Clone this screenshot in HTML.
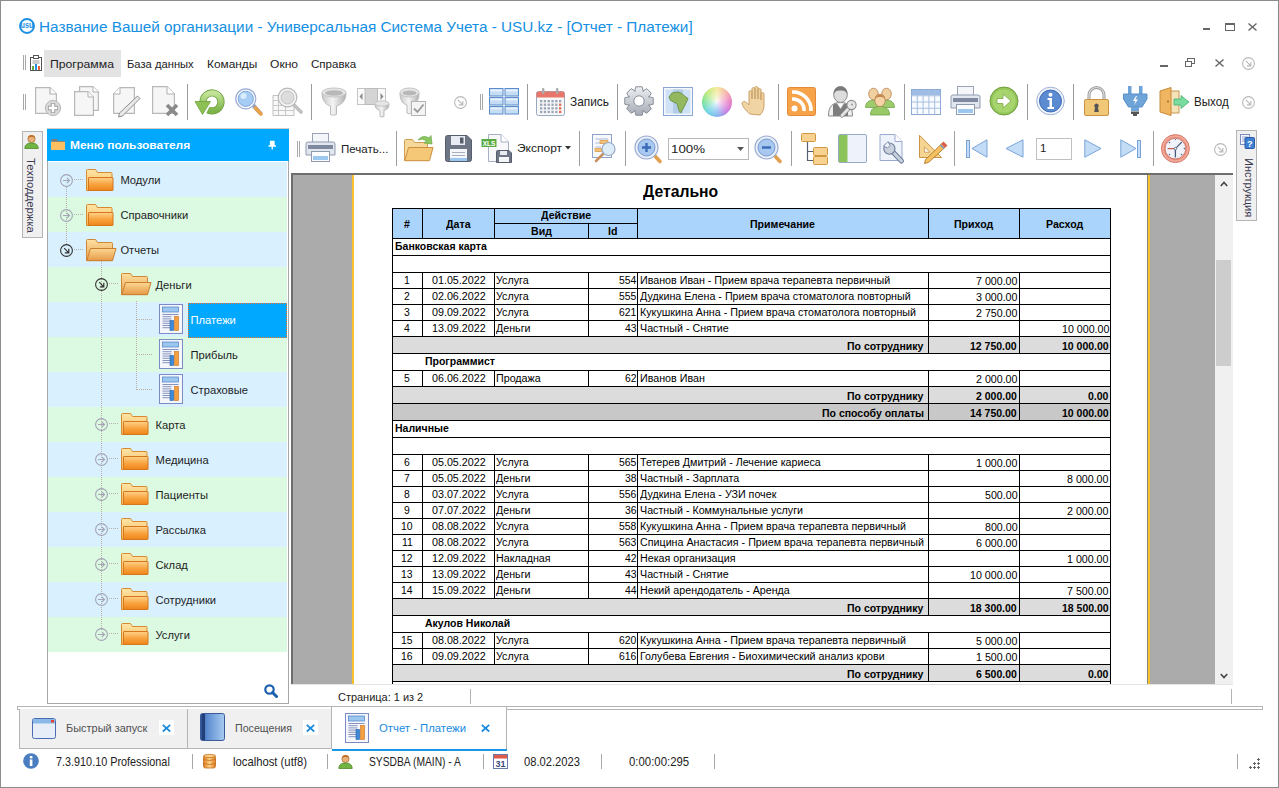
<!DOCTYPE html>
<html><head><meta charset="utf-8">
<style>
*{box-sizing:border-box;margin:0;padding:0}
html,body{width:1279px;height:788px;overflow:hidden;background:#fff;font-family:"Liberation Sans",sans-serif;color:#222}
.a{position:absolute}
svg.a{overflow:visible}
.t{position:absolute;white-space:nowrap;line-height:1}
</style></head><body>
<div class="a" style="left:0px;top:0px;width:1279px;height:788px;border:1px solid #8c8c8c;border-right:none"></div>
<div class="a" style="left:1278px;top:0px;width:1px;height:788px;background:#8c8c8c"></div>
<svg class="a" style="left:19px;top:18px" width="16" height="16" viewBox="0 0 16 16"><circle cx="8" cy="8" r="7" fill="none" stroke="#1b8fe3" stroke-width="1.9"/><text x="1.6" y="10.2" font-size="8.6" font-weight="bold" fill="#1b8fe3" textLength="12.8" lengthAdjust="spacingAndGlyphs" font-family="Liberation Sans">usu</text></svg>
<div class="t" style="left:39.20px;top:19.25px;font-size:15.3px;color:#1590e2;transform:scaleX(1.0009);transform-origin:0 0;">Название Вашей организации - Универсальная Система Учета - USU.kz - [Отчет - Платежи]</div>
<div class="a" style="left:1203px;top:28px;width:7px;height:2px;background:#666"></div>
<div class="a" style="left:1225px;top:23px;width:10px;height:8px;border:1px solid #666;border-top-width:2px"></div>
<svg class="a" style="left:1248px;top:23px" width="9" height="8" viewBox="0 0 9 8"><path d="M0.5 0.5L8.5 7.5M8.5 0.5L0.5 7.5" stroke="#666" stroke-width="1.4"/></svg>
<div class="a" style="left:23px;top:55px;width:1px;height:15px;background:#a8a8a8"></div>
<div class="a" style="left:25px;top:55px;width:1px;height:15px;background:#a8a8a8"></div>
<svg class="a" style="left:30px;top:55px" width="12" height="16" viewBox="0 0 12 16"><rect x="0.5" y="2.5" width="11" height="13" fill="#fff" stroke="#555"/><rect x="3.5" y="0.5" width="5" height="3" fill="#fff" stroke="#555"/><path d="M2.5 6h7M2.5 8h7" stroke="#999"/><rect x="2" y="11" width="2" height="4" fill="#6aaa3a"/><rect x="5" y="9" width="2" height="6" fill="#2a8ee0"/><rect x="8" y="11" width="2" height="4" fill="#e8603a"/></svg>
<div class="a" style="left:44px;top:50px;width:77px;height:27px;background:#e3e3e3"></div>
<div class="t" style="left:50.30px;top:59.07px;font-size:11.5px;color:#222;transform:scaleX(1.0611);transform-origin:0 0;">Программа</div>
<div class="t" style="left:127.10px;top:59.07px;font-size:11.5px;color:#222;transform:scaleX(0.9740);transform-origin:0 0;">База данных</div>
<div class="t" style="left:206.90px;top:59.07px;font-size:11.5px;color:#222;transform:scaleX(1.0328);transform-origin:0 0;">Команды</div>
<div class="t" style="left:270.30px;top:59.07px;font-size:11.5px;color:#222;transform:scaleX(1.0510);transform-origin:0 0;">Окно</div>
<div class="t" style="left:311.00px;top:59.07px;font-size:11.5px;color:#222;transform:scaleX(1.0036);transform-origin:0 0;">Справка</div>
<div class="a" style="left:1160px;top:65px;width:8px;height:2px;background:#666"></div>
<svg class="a" style="left:1185px;top:58px" width="10" height="9" viewBox="0 0 10 9"><rect x="2.5" y="0.5" width="7" height="5" fill="none" stroke="#666"/><rect x="0.5" y="3.5" width="6" height="5" fill="#fff" stroke="#666"/></svg>
<svg class="a" style="left:1215px;top:59px" width="9" height="8" viewBox="0 0 9 8"><path d="M0.5 0.5L8.5 7.5M8.5 0.5L0.5 7.5" stroke="#666" stroke-width="1.4"/></svg>
<svg class="a" style="left:1242px;top:57px" width="13" height="13" viewBox="0 0 13 13"><circle cx="6.5" cy="6.5" r="5.9" fill="none" stroke="#b8b8b8" stroke-width="1.1"/><path d="M3.9 3.9L8.84 8.84M8.84 4.94V8.84H4.94" fill="none" stroke="#b8b8b8" stroke-width="1.1"/></svg>
<div class="a" style="left:23px;top:94px;width:1px;height:16px;background:#a8a8a8"></div>
<div class="a" style="left:25px;top:94px;width:1px;height:16px;background:#a8a8a8"></div>
<svg class="a" style="left:35px;top:87px" width="27" height="29" viewBox="0 0 27 29"><path d="M0.6 0.6H15L21.4 7V26.4H0.6Z" fill="#f6f6f6" stroke="#b8b8b8" stroke-width="1.2"/><path d="M15 0.6V7H21.4" fill="#fff" stroke="#b0b0b0" stroke-width="1.2"/><circle cx="18" cy="21" r="7.6" fill="#dadada" stroke="#b8b8b8"/><path d="M18 16V26M13 21H23" stroke="#a0a0a0" stroke-width="4.4"/><path d="M18 16.8V25.2M13.8 21H22.2" stroke="#fff" stroke-width="2.4"/></svg>
<svg class="a" style="left:74px;top:86px" width="26" height="30" viewBox="0 0 26 30"><path d="M5.6 0.6H19L24.4 6V24.4H5.6Z" fill="#f6f6f6" stroke="#b8b8b8" stroke-width="1.2"/><path d="M19 0.6V6H24.4" fill="#fff" stroke="#b0b0b0"/><path d="M0.6 5.6H14L19.4 11V29.4H0.6Z" fill="#f6f6f6" stroke="#b8b8b8" stroke-width="1.2"/><path d="M14 5.6V11H19.4" fill="#fff" stroke="#b0b0b0"/></svg>
<svg class="a" style="left:113px;top:87px" width="28" height="30" viewBox="0 0 28 30"><path d="M7 0.6H21.4V26.4H0.6V7Z" fill="#f6f6f6" stroke="#b8b8b8" stroke-width="1.2"/><path d="M7 0.6V7H0.6" fill="#fff" stroke="#b0b0b0"/><path d="M24.5 9L27 11.5L9.5 29L5.5 30L6.5 26Z" fill="#e8e8e8" stroke="#8c8c8c" stroke-width="1"/></svg>
<svg class="a" style="left:152px;top:86px" width="29" height="30" viewBox="0 0 29 30"><path d="M0.6 0.6H15L22.4 8V27.4H0.6Z" fill="#f6f6f6" stroke="#b8b8b8" stroke-width="1.2"/><path d="M15 0.6V8H22.4" fill="#fff" stroke="#b0b0b0"/><path d="M15 19L25 29M25 19L15 29" stroke="#8a8a8a" stroke-width="3.6"/></svg>
<div class="a" style="left:187px;top:84px;width:1px;height:36px;background:#9a9a9a"></div>
<svg class="a" style="left:194px;top:88px" width="32" height="28" viewBox="0 0 32 28"><defs><linearGradient id="rg" x1="0" y1="0" x2="0" y2="1"><stop offset="0" stop-color="#c4e49a"/><stop offset="1" stop-color="#7cb448"/></linearGradient></defs><path d="M9 14A9 9 0 1 1 14 22" fill="none" stroke="#6fa23e" stroke-width="7.2"/><path d="M9 14A9 9 0 1 1 14 22" fill="none" stroke="url(#rg)" stroke-width="5.4"/><path d="M1 13.5H16.5L8.5 26.5Z" fill="#8cc055" stroke="#6fa23e" stroke-width="0.8" stroke-linejoin="round"/></svg>
<svg class="a" style="left:234px;top:87px" width="30" height="30" viewBox="0 0 30 30"><path d="M19 18L27 27" stroke="#8a9bc0" stroke-width="4"/><path d="M21.5 21L27 27" stroke="#e8a24a" stroke-width="3.6" stroke-linecap="round"/><circle cx="11.8" cy="11.8" r="10" fill="#fff" stroke="#9aabd8" stroke-width="1.2"/><circle cx="11.8" cy="11.8" r="7.6" fill="#a6cdf4" stroke="#7fa6dc"/><circle cx="9.5" cy="9" r="3" fill="#d8ecfd"/></svg>
<svg class="a" style="left:272px;top:86px" width="32" height="31" viewBox="0 0 32 31"><path d="M1 9.5H22V29.5H1Z" fill="#f8f8f8" stroke="#c0c0c0"/><path d="M1 14.5H22M1 19.5H22M1 24.5H22M6.5 9.5V29.5M13.5 9.5V29.5" stroke="#c8c8c8"/><path d="M21 18L29 26" stroke="#c0c0c0" stroke-width="3.8" stroke-linecap="round"/><circle cx="15.5" cy="11.5" r="9.3" fill="#f4f4f4" stroke="#b8b8b8" stroke-width="1.2"/><circle cx="15.5" cy="11.5" r="6.5" fill="#dcdcdc" stroke="#c4c4c4"/></svg>
<div class="a" style="left:311px;top:84px;width:1px;height:36px;background:#9a9a9a"></div>
<svg class="a" style="left:321px;top:87px" width="27" height="29" viewBox="0 0 27 29"><defs><linearGradient id="fg" x1="0" x2="1"><stop offset="0" stop-color="#c8c8c8"/><stop offset="0.45" stop-color="#f4f4f4"/><stop offset="1" stop-color="#b0b0b0"/></linearGradient></defs><path d="M1 6C1 15 6 18 9.5 19V27.5Q12.5 29 15.5 27.5V19C19 18 25 15 25 6Z" fill="url(#fg)" stroke="#bcbcbc"/><ellipse cx="13" cy="5.5" rx="12" ry="4.5" fill="#e6e6e6" stroke="#c4c4c4"/><ellipse cx="13" cy="6" rx="9" ry="2.8" fill="#b8b8b8"/></svg>
<svg class="a" style="left:357px;top:88px" width="33" height="30" viewBox="0 0 33 30"><rect x="0.5" y="0.5" width="28" height="16" fill="#fafafa" stroke="#c4c4c4"/><rect x="8" y="0.5" width="12.5" height="16" fill="#d4d4d4" stroke="#bcbcbc"/><path d="M5.5 5V12L2.5 8.5Z M23.5 5V12L26.5 8.5Z" fill="#8a8a8a"/><path d="M18 16C18 21 21 22 23 22.5V28.5Q25 29.5 27 28.5V22.5C29 22 32 21 32 16Z" fill="url(#fg)" stroke="#bcbcbc"/><ellipse cx="25" cy="15.5" rx="7" ry="2.6" fill="#e6e6e6" stroke="#c4c4c4"/></svg>
<svg class="a" style="left:399px;top:87px" width="28" height="30" viewBox="0 0 28 30"><path d="M1 6C1 15 5 17 8 18V26Q10.5 27.5 13 26V18C16 17 20 15 20 6Z" fill="url(#fg)" stroke="#bcbcbc"/><ellipse cx="10.5" cy="5.5" rx="9.5" ry="4.5" fill="#e6e6e6" stroke="#c4c4c4"/><ellipse cx="10.5" cy="6" rx="7" ry="2.6" fill="#b8b8b8"/><rect x="12.5" y="14.5" width="14" height="14" fill="#f4f4f4" stroke="#b4b4b4"/><path d="M15 21.5L18.5 25L24.5 17.5" fill="none" stroke="#9a9a9a" stroke-width="1.8"/></svg>
<svg class="a" style="left:454px;top:96px" width="13" height="13" viewBox="0 0 13 13"><circle cx="6.5" cy="6.5" r="5.9" fill="none" stroke="#b8b8b8" stroke-width="1.1"/><path d="M3.9 3.9L8.84 8.84M8.84 4.94V8.84H4.94" fill="none" stroke="#b8b8b8" stroke-width="1.1"/></svg>
<div class="a" style="left:480px;top:94px;width:1px;height:16px;background:#a8a8a8"></div>
<div class="a" style="left:482px;top:94px;width:1px;height:16px;background:#a8a8a8"></div>
<svg class="a" style="left:489px;top:88px" width="30" height="27" viewBox="0 0 30 27"><rect x="0.5" y="0.5" width="13.5" height="7.5" fill="#c4dcf4" stroke="#5c8ccc"/><rect x="1.5" y="1.5" width="11.5" height="2" fill="#e4f0fc"/><rect x="16.0" y="0.5" width="13.5" height="7.5" fill="#c4dcf4" stroke="#5c8ccc"/><rect x="17.0" y="1.5" width="11.5" height="2" fill="#e4f0fc"/><rect x="0.5" y="9.5" width="13.5" height="7.5" fill="#c4dcf4" stroke="#5c8ccc"/><rect x="1.5" y="10.5" width="11.5" height="2" fill="#e4f0fc"/><rect x="16.0" y="9.5" width="13.5" height="7.5" fill="#c4dcf4" stroke="#5c8ccc"/><rect x="17.0" y="10.5" width="11.5" height="2" fill="#e4f0fc"/><rect x="0.5" y="18.5" width="13.5" height="7.5" fill="#c4dcf4" stroke="#5c8ccc"/><rect x="1.5" y="19.5" width="11.5" height="2" fill="#e4f0fc"/><rect x="16.0" y="18.5" width="13.5" height="7.5" fill="#c4dcf4" stroke="#5c8ccc"/><rect x="17.0" y="19.5" width="11.5" height="2" fill="#e4f0fc"/></svg>
<div class="a" style="left:527px;top:84px;width:1px;height:36px;background:#9a9a9a"></div>
<svg class="a" style="left:536px;top:87px" width="29" height="29" viewBox="0 0 29 29"><rect x="0.5" y="4.5" width="28" height="24" rx="2" fill="#f8f8f8" stroke="#9aa8c0"/><path d="M0.5 6.5Q0.5 4.5 2.5 4.5H26.5Q28.5 4.5 28.5 6.5V10.5H0.5Z" fill="#e9766a"/><rect x="6" y="1" width="2.4" height="6" rx="1" fill="#aaa"/><rect x="20" y="1" width="2.4" height="6" rx="1" fill="#aaa"/><rect x="4.0" y="13.0" width="2.3" height="2.3" fill="#9aa4b8"/><rect x="7.8" y="13.0" width="2.3" height="2.3" fill="#9aa4b8"/><rect x="11.6" y="13.0" width="2.3" height="2.3" fill="#9aa4b8"/><rect x="15.4" y="13.0" width="2.3" height="2.3" fill="#9aa4b8"/><rect x="19.2" y="13.0" width="2.3" height="2.3" fill="#9aa4b8"/><rect x="23.0" y="13.0" width="2.3" height="2.3" fill="#9aa4b8"/><rect x="4.0" y="16.6" width="2.3" height="2.3" fill="#9aa4b8"/><rect x="7.8" y="16.6" width="2.3" height="2.3" fill="#9aa4b8"/><rect x="11.6" y="16.6" width="2.3" height="2.3" fill="#9aa4b8"/><rect x="15.4" y="16.6" width="2.3" height="2.3" fill="#9aa4b8"/><rect x="19.2" y="16.6" width="2.3" height="2.3" fill="#9aa4b8"/><rect x="23.0" y="16.6" width="2.3" height="2.3" fill="#e06a55"/><rect x="4.0" y="20.2" width="2.3" height="2.3" fill="#9aa4b8"/><rect x="7.8" y="20.2" width="2.3" height="2.3" fill="#9aa4b8"/><rect x="11.6" y="20.2" width="2.3" height="2.3" fill="#9aa4b8"/><rect x="15.4" y="20.2" width="2.3" height="2.3" fill="#9aa4b8"/><rect x="19.2" y="20.2" width="2.3" height="2.3" fill="#9aa4b8"/><rect x="23.0" y="20.2" width="2.3" height="2.3" fill="#e06a55"/><rect x="4.0" y="23.8" width="2.3" height="2.3" fill="#9aa4b8"/><rect x="7.8" y="23.8" width="2.3" height="2.3" fill="#9aa4b8"/><rect x="11.6" y="23.8" width="2.3" height="2.3" fill="#9aa4b8"/><rect x="15.4" y="23.8" width="2.3" height="2.3" fill="#9aa4b8"/><rect x="19.2" y="23.8" width="2.3" height="2.3" fill="#9aa4b8"/><rect x="23.0" y="23.8" width="2.3" height="2.3" fill="#e06a55"/></svg>
<div class="t" style="left:570.00px;top:95.50px;font-size:12.4px;color:#222;transform:scaleX(0.9589);transform-origin:0 0;">Запись</div>
<div class="a" style="left:617px;top:84px;width:1px;height:36px;background:#9a9a9a"></div>
<svg class="a" style="left:624px;top:86px" width="30" height="30" viewBox="0 0 30 30"><defs><linearGradient id="gg" x1="0" y1="0" x2="0" y2="1"><stop offset="0" stop-color="#eef0f4"/><stop offset="1" stop-color="#a4aab4"/></linearGradient></defs><polygon points="24.59,10.72 29.25,11.81 29.25,18.19 24.59,19.28 24.81,18.75 27.33,22.82 22.82,27.33 18.75,24.81 19.28,24.59 18.19,29.25 11.81,29.25 10.72,24.59 11.25,24.81 7.18,27.33 2.67,22.82 5.19,18.75 5.41,19.28 0.75,18.19 0.75,11.81 5.41,10.72 5.19,11.25 2.67,7.18 7.18,2.67 11.25,5.19 10.72,5.41 11.81,0.75 18.19,0.75 19.28,5.41 18.75,5.19 22.82,2.67 27.33,7.18 24.81,11.25" fill="url(#gg)" stroke="#8a909a" stroke-linejoin="round"/><circle cx="15" cy="15" r="5.2" fill="#fff" stroke="#8a909a"/></svg>
<svg class="a" style="left:663px;top:87px" width="31" height="29" viewBox="0 0 31 29"><rect x="0.5" y="0.5" width="29" height="28" fill="#f4f8fc" stroke="#8aa6d4"/><rect x="2.5" y="2.5" width="25" height="24" fill="#cfe1f4"/><rect x="10" y="2.5" width="10" height="24" fill="#b2cce8"/><path d="M9 6L15 5L19 6.5L21.5 9L25 11.5L23 16L21 20L17.5 26L15.5 22.5L14.5 17.5L12 15.5L7.5 13.5L6 10Z" fill="#94b860" stroke="#5e8a34" stroke-width="0.8" stroke-linejoin="round"/></svg>
<div class="a" style="left:702px;top:87px;width:30px;height:30px;border-radius:50%;background:radial-gradient(circle,rgba(255,255,255,0.9) 0,rgba(255,255,255,0.5) 30%,rgba(255,255,255,0) 75%),conic-gradient(#f4e890,#f4a8a0,#e870c0,#c070e0,#70b0f0,#60d0e0,#70e090,#b8e870,#f4e890)"></div>
<svg class="a" style="left:741px;top:86px" width="30" height="31" viewBox="0 0 30 31"><path d="M9 28C5 25 1 20 1 17C2 15 4 15 6 17L8 19V6C8 4 11 4 11 6V13V3C11 1 14 1 14 3V13V2C14 0 17 0 17 2V13V4C17 2 20 2 20 4V14V8C20 6 23 6 23 8V19C23 24 21 27 19 29Z" fill="#f1d4a4" stroke="#c9a066" stroke-width="1"/></svg>
<div class="a" style="left:778px;top:84px;width:1px;height:36px;background:#9a9a9a"></div>
<svg class="a" style="left:787px;top:87px" width="30" height="29" viewBox="0 0 30 29"><rect x="0.5" y="0.5" width="28" height="28" rx="2" fill="#f7a34a" stroke="#e4893a"/><circle cx="7.5" cy="21.5" r="3" fill="#fff"/><path d="M5 12A11 11 0 0 1 17 24M5 5A18 18 0 0 1 24 24" fill="none" stroke="#fff" stroke-width="3.6"/></svg>
<svg class="a" style="left:827px;top:86px" width="30" height="31" viewBox="0 0 30 31"><path d="M1.5 30C1.5 21 5 16.5 13.5 16.5C22 16.5 25.5 21 25.5 30Z" fill="#f0f0f0" stroke="#8a8a8a"/><path d="M6 30V18.5Q13.5 16 21 18.5V30Z" fill="#7e7e7e"/><path d="M9.5 16.8L13.5 23L17.5 16.8Z" fill="#fff" stroke="#999" stroke-width="0.6"/><ellipse cx="13.5" cy="8.5" rx="6.8" ry="8" fill="#dcdcdc" stroke="#8a8a8a"/><path d="M6.7 8.5Q6.5 0.5 13.5 0.5Q20.5 0.5 20.3 8.5Q19 4 13.5 4.5Q8 4 6.7 8.5Z" fill="#7a7a7a"/><path d="M22 22L15 29.5" stroke="#8a8a8a" stroke-width="4.2" stroke-linecap="round"/><path d="M22 22L15 29.5" stroke="#e6e6e6" stroke-width="2.6" stroke-linecap="round"/><circle cx="24.5" cy="19" r="4.6" fill="#e6e6e6" stroke="#8a8a8a" stroke-width="1.1"/><circle cx="25" cy="18.5" r="1" fill="#999"/></svg>
<svg class="a" style="left:864px;top:86px" width="32" height="30" viewBox="0 0 32 30"><path d="M1.5 21.5C1.5 16.5 5 14 9.5 14C14 14 17.5 16.5 17.5 21.5Z" fill="#9ccc6c" stroke="#74a44a" stroke-width="0.8"/><path d="M14.5 21.5C14.5 16.5 18 14 22.5 14C27 14 30.5 16.5 30.5 21.5Z" fill="#9ccc6c" stroke="#74a44a" stroke-width="0.8"/><ellipse cx="9.5" cy="8" rx="4.8" ry="5.8" fill="#f0d0a0" stroke="#b88050" stroke-width="0.8"/><ellipse cx="22.5" cy="8" rx="4.8" ry="5.8" fill="#f0d0a0" stroke="#b88050" stroke-width="0.8"/><path d="M6.5 29C6.5 23 10 20.5 16 20.5C22 20.5 25.5 23 25.5 29Z" fill="#98c868" stroke="#6e9e44" stroke-width="0.8"/><ellipse cx="16" cy="14.5" rx="5.2" ry="6.2" fill="#f4d4a4" stroke="#b88050" stroke-width="0.8"/><path d="M10.8 13Q11 8.3 16 8.3Q21 8.3 21.2 13Q19 10.5 16 11Q13 10.5 10.8 13Z" fill="#c48a50"/></svg>
<div class="a" style="left:904px;top:84px;width:1px;height:36px;background:#9a9a9a"></div>
<svg class="a" style="left:911px;top:88px" width="30" height="28" viewBox="0 0 30 28"><rect x="0.5" y="1.5" width="29" height="25" fill="#f8fbff" stroke="#8ea9d4"/><rect x="1" y="2" width="28" height="5" fill="#9dbde6"/><path d="M0.5 7.75H29.5" stroke="#a8bfdf"/><path d="M0.5 14.00H29.5" stroke="#a8bfdf"/><path d="M0.5 20.25H29.5" stroke="#a8bfdf"/><path d="M6.30 1.5V26.5" stroke="#a8bfdf"/><path d="M12.10 1.5V26.5" stroke="#a8bfdf"/><path d="M17.90 1.5V26.5" stroke="#a8bfdf"/><path d="M23.70 1.5V26.5" stroke="#a8bfdf"/></svg>
<svg class="a" style="left:950px;top:86px" width="31" height="30" viewBox="0 0 31 30"><rect x="7.5" y="0.5" width="16" height="11" fill="#f4f6fa" stroke="#9aa4b4"/><path d="M1 11Q1 9 3 9H28Q30 9 30 11V22H1Z" fill="#e2e6ee" stroke="#8f9aae"/><rect x="3" y="12" width="25" height="4" fill="#7f8aa0"/><rect x="6.5" y="18.5" width="18" height="10" fill="#fafcff" stroke="#8f9aae"/><rect x="8" y="23" width="15" height="4" fill="#9cc7ee"/></svg>
<svg class="a" style="left:989px;top:86px" width="30" height="30" viewBox="0 0 30 30"><circle cx="15" cy="15" r="14" fill="#94c65a" stroke="#6e9e3c"/><circle cx="15" cy="15" r="11.5" fill="#a8d46e"/><path d="M8 12.5H14V8L22 15L14 22V17.5H8Z" fill="#fff" stroke="#7aa845" stroke-width="0.8"/></svg>
<div class="a" style="left:1027px;top:84px;width:1px;height:36px;background:#9a9a9a"></div>
<svg class="a" style="left:1036px;top:86px" width="29" height="30" viewBox="0 0 29 30"><circle cx="14.5" cy="15" r="13.8" fill="#f2f5fb" stroke="#9cb0d6"/><circle cx="14.5" cy="15" r="11" fill="#5b8bd0" stroke="#3e6bb6"/><circle cx="14.5" cy="8.8" r="2" fill="#fff"/><path d="M11.5 12H16V21H18V23H11.5V21H13.5V14H11.5Z" fill="#fff"/></svg>
<div class="a" style="left:1073px;top:84px;width:1px;height:36px;background:#9a9a9a"></div>
<svg class="a" style="left:1084px;top:86px" width="25" height="31" viewBox="0 0 25 31"><path d="M5 14V9A7.5 7.5 0 0 1 20 9V14" fill="none" stroke="#9a9a9a" stroke-width="3"/><path d="M5 14V9A7.5 7.5 0 0 1 20 9V14" fill="none" stroke="#dcdcdc" stroke-width="1.2"/><rect x="0.5" y="13.5" width="24" height="16" rx="1.5" fill="#f0c878" stroke="#c89440"/><path d="M12.5 17.5A2.3 2.3 0 0 1 14 21.5L14.8 26H10.2L11 21.5A2.3 2.3 0 0 1 12.5 17.5Z" fill="#555"/></svg>
<svg class="a" style="left:1123px;top:86px" width="25" height="31" viewBox="0 0 25 31"><rect x="5" y="0" width="3.5" height="8" fill="#6ea4d8"/><rect x="16" y="0" width="3.5" height="8" fill="#6ea4d8"/><path d="M0.5 8H24V13L19 21H5.5L0.5 13Z" fill="#6ea4d8" stroke="#5a90c8"/><rect x="8" y="21" width="8" height="4" fill="#6ea4d8"/><rect x="8" y="25.5" width="8" height="2.5" fill="#555"/><rect x="10" y="28" width="4" height="2" fill="#555"/><path d="M13 10L10 15H12.5L11 19L15 13.5H12.5L14 10Z" fill="#fff"/></svg>
<svg class="a" style="left:1159px;top:87px" width="31" height="29" viewBox="0 0 31 29"><rect x="10" y="4" width="10" height="22" fill="#f4e2b8" stroke="#c89a52"/><path d="M1 4L12 0.5V28.5L1 25Z" fill="#f0b560" stroke="#c88a3a" stroke-linejoin="round"/><circle cx="9" cy="14.5" r="1" fill="#9a6a2a"/><path d="M15 12H22V8.5L30 15L22 21.5V18H15Z" fill="#78dca0" stroke="#48b070" stroke-width="0.8"/></svg>
<div class="t" style="left:1194.00px;top:95.50px;font-size:12.4px;color:#222;transform:scaleX(0.9386);transform-origin:0 0;">Выход</div>
<svg class="a" style="left:1242px;top:96px" width="13" height="13" viewBox="0 0 13 13"><circle cx="6.5" cy="6.5" r="5.9" fill="none" stroke="#b8b8b8" stroke-width="1.1"/><path d="M3.9 3.9L8.84 8.84M8.84 4.94V8.84H4.94" fill="none" stroke="#b8b8b8" stroke-width="1.1"/></svg>
<div class="a" style="left:22px;top:131px;width:21px;height:107px;background:#f0f0f0;border:1px solid #b4b4b4"></div>
<svg class="a" style="left:24px;top:134px" width="15" height="15" viewBox="0 0 15 15"><circle cx="7.5" cy="5" r="3.6" fill="#e8b27a" stroke="#b0723a" stroke-width="0.8"/><path d="M3.8 4.5Q4 1 7.5 1Q11 1 11.2 4.5Q10 2.6 7.5 3Q5 2.6 3.8 4.5Z" fill="#c0702a"/><path d="M0.8 14.5C0.8 10.5 3.5 9 7.5 9C11.5 9 14.2 10.5 14.2 14.5Z" fill="#72b444" stroke="#4e8a2a" stroke-width="0.8"/></svg>
<div class="t" style="left:36.3px;top:157.80px;font-size:11.2px;color:#3a3a50;transform:rotate(90deg) scaleX(1.0100);transform-origin:0 0">Техподдержка</div>
<div class="a" style="left:47px;top:128px;width:242px;height:576px;border:1px solid #a8a8a8;background:#fff"></div>
<div class="a" style="left:47px;top:128px;width:242px;height:33px;background:#00a8ff;border-top:1px solid #d8ccc4"></div>
<svg class="a" style="left:51px;top:139px" width="14" height="11" viewBox="0 0 14 11"><path d="M0.5 3V1Q0.5 0 1.5 0H5.5L7 2H13.5V3Z" fill="#7a7a7a"/><rect x="0" y="2.8" width="14" height="8.2" fill="#fcc062"/></svg>
<div class="t" style="left:70.00px;top:140.43px;font-size:11.3px;color:#fff;font-weight:bold;transform:scaleX(1.0563);transform-origin:0 0;">Меню пользователя</div>
<svg class="a" style="left:268px;top:141px" width="8" height="9" viewBox="0 0 8 9"><path d="M2 0.5H6.5M2.5 0.5V5M6 0.5V5M0.5 5H8M4.2 5V8.5" stroke="#fff" stroke-width="1.3" fill="none"/><rect x="2.5" y="1" width="3.5" height="4" fill="#fff"/></svg>
<div class="a" style="left:48px;top:162px;width:239px;height:35px;background:#d9f0fe"></div>
<div class="a" style="left:48px;top:197px;width:239px;height:35px;background:#dcf9e2"></div>
<div class="a" style="left:48px;top:232px;width:239px;height:35px;background:#d9f0fe"></div>
<div class="a" style="left:48px;top:267px;width:239px;height:35px;background:#dcf9e2"></div>
<div class="a" style="left:48px;top:302px;width:239px;height:35px;background:#d9f0fe"></div>
<div class="a" style="left:48px;top:337px;width:239px;height:35px;background:#dcf9e2"></div>
<div class="a" style="left:48px;top:372px;width:239px;height:35px;background:#d9f0fe"></div>
<div class="a" style="left:48px;top:407px;width:239px;height:35px;background:#dcf9e2"></div>
<div class="a" style="left:48px;top:442px;width:239px;height:35px;background:#d9f0fe"></div>
<div class="a" style="left:48px;top:477px;width:239px;height:35px;background:#dcf9e2"></div>
<div class="a" style="left:48px;top:512px;width:239px;height:35px;background:#d9f0fe"></div>
<div class="a" style="left:48px;top:547px;width:239px;height:35px;background:#dcf9e2"></div>
<div class="a" style="left:48px;top:582px;width:239px;height:35px;background:#d9f0fe"></div>
<div class="a" style="left:48px;top:617px;width:239px;height:35px;background:#dcf9e2"></div>
<div class="a" style="left:66px;top:187px;width:1px;height:57px;background:repeating-linear-gradient(180deg,#b8b0a8 0 1px,transparent 1px 2px)"></div>
<div class="a" style="left:101px;top:259px;width:1px;height:371px;background:repeating-linear-gradient(180deg,#b8b0a8 0 1px,transparent 1px 2px)"></div>
<div class="a" style="left:136px;top:301px;width:1px;height:90px;background:repeating-linear-gradient(180deg,#b8b0a8 0 1px,transparent 1px 2px)"></div>
<svg class="a" style="left:60.0px;top:174.0px" width="13" height="13" viewBox="0 0 13 13"><circle cx="6.5" cy="6.5" r="5.9" fill="none" stroke="#a4a4b4" stroke-width="1.1"/><path d="M3 6.5H9.5M6.8 3.8L9.5 6.5L6.8 9.2" fill="none" stroke="#a4a4b4" stroke-width="1.1"/></svg>
<div class="a" style="left:74px;top:179px;width:10px;height:1px;background:repeating-linear-gradient(90deg,#b8b0a8 0 1px,transparent 1px 2px)"></div>
<svg class="a" style="left:86px;top:169px" width="28" height="23" viewBox="0 0 28 23"><defs><linearGradient id="fb" x1="0" y1="0" x2="0" y2="1"><stop offset="0" stop-color="#fee6a8"/><stop offset="1" stop-color="#f9b554"/></linearGradient><linearGradient id="ff" x1="0" y1="0" x2="0" y2="1"><stop offset="0" stop-color="#ffd28a"/><stop offset="0.5" stop-color="#f9a542"/><stop offset="1" stop-color="#ee8418"/></linearGradient></defs><path d="M0.5 21.5V1.5Q0.5 0.5 1.5 0.5H9.5L11.5 3.5H25.5Q26 3.5 26 4.5V21.5Z" fill="url(#fb)" stroke="#d98a30" stroke-width="1"/><path d="M2.5 21.5V9Q2.5 8.5 3 8.5H26.5Q27 8.5 27 9V21Q27 21.5 26.5 21.5Z" fill="url(#ff)" stroke="#d5771c" stroke-width="1"/></svg>
<div class="t" style="left:120.40px;top:174.82px;font-size:11.2px;color:#1e1e1e;">Модули</div>
<svg class="a" style="left:60.0px;top:209.0px" width="13" height="13" viewBox="0 0 13 13"><circle cx="6.5" cy="6.5" r="5.9" fill="none" stroke="#a4a4b4" stroke-width="1.1"/><path d="M3 6.5H9.5M6.8 3.8L9.5 6.5L6.8 9.2" fill="none" stroke="#a4a4b4" stroke-width="1.1"/></svg>
<div class="a" style="left:74px;top:214px;width:10px;height:1px;background:repeating-linear-gradient(90deg,#b8b0a8 0 1px,transparent 1px 2px)"></div>
<svg class="a" style="left:86px;top:204px" width="28" height="23" viewBox="0 0 28 23"><defs><linearGradient id="fb" x1="0" y1="0" x2="0" y2="1"><stop offset="0" stop-color="#fee6a8"/><stop offset="1" stop-color="#f9b554"/></linearGradient><linearGradient id="ff" x1="0" y1="0" x2="0" y2="1"><stop offset="0" stop-color="#ffd28a"/><stop offset="0.5" stop-color="#f9a542"/><stop offset="1" stop-color="#ee8418"/></linearGradient></defs><path d="M0.5 21.5V1.5Q0.5 0.5 1.5 0.5H9.5L11.5 3.5H25.5Q26 3.5 26 4.5V21.5Z" fill="url(#fb)" stroke="#d98a30" stroke-width="1"/><path d="M2.5 21.5V9Q2.5 8.5 3 8.5H26.5Q27 8.5 27 9V21Q27 21.5 26.5 21.5Z" fill="url(#ff)" stroke="#d5771c" stroke-width="1"/></svg>
<div class="t" style="left:120.40px;top:209.82px;font-size:11.2px;color:#1e1e1e;">Справочники</div>
<svg class="a" style="left:60.0px;top:244.0px" width="13" height="13" viewBox="0 0 13 13"><circle cx="6.5" cy="6.5" r="5.9" fill="none" stroke="#333" stroke-width="1.1"/><path d="M4.2 4.2L8.8 8.8M8.8 4.8V8.8H4.8" fill="none" stroke="#333" stroke-width="1.2"/></svg>
<div class="a" style="left:74px;top:249px;width:10px;height:1px;background:repeating-linear-gradient(90deg,#b8b0a8 0 1px,transparent 1px 2px)"></div>
<svg class="a" style="left:86px;top:239px" width="31" height="23" viewBox="0 0 31 23"><defs><linearGradient id="fo" x1="0" y1="0" x2="0" y2="1"><stop offset="0" stop-color="#fde0a0"/><stop offset="1" stop-color="#e8a050"/></linearGradient><linearGradient id="fo2" x1="0" y1="0" x2="0" y2="1"><stop offset="0" stop-color="#fcd792"/><stop offset="1" stop-color="#e69a48"/></linearGradient></defs><path d="M0.5 21.5V1.5Q0.5 0.5 1.5 0.5H9.5L11.5 3.5H25.5Q26.5 3.5 26.5 4.5V21.5Z" fill="url(#fo)" stroke="#d08838" stroke-width="1"/><path d="M0.8 21.7L4.5 9.5H30L26.5 21.7Z" fill="url(#fo2)" stroke="#cc7e30" stroke-width="1" stroke-linejoin="round"/></svg>
<div class="t" style="left:120.40px;top:244.82px;font-size:11.2px;color:#1e1e1e;">Отчеты</div>
<svg class="a" style="left:95.0px;top:278.0px" width="13" height="13" viewBox="0 0 13 13"><circle cx="6.5" cy="6.5" r="5.9" fill="none" stroke="#333" stroke-width="1.1"/><path d="M4.2 4.2L8.8 8.8M8.8 4.8V8.8H4.8" fill="none" stroke="#333" stroke-width="1.2"/></svg>
<div class="a" style="left:109px;top:283px;width:10px;height:1px;background:repeating-linear-gradient(90deg,#b8b0a8 0 1px,transparent 1px 2px)"></div>
<svg class="a" style="left:121px;top:273px" width="31" height="23" viewBox="0 0 31 23"><defs><linearGradient id="fo" x1="0" y1="0" x2="0" y2="1"><stop offset="0" stop-color="#fde0a0"/><stop offset="1" stop-color="#e8a050"/></linearGradient><linearGradient id="fo2" x1="0" y1="0" x2="0" y2="1"><stop offset="0" stop-color="#fcd792"/><stop offset="1" stop-color="#e69a48"/></linearGradient></defs><path d="M0.5 21.5V1.5Q0.5 0.5 1.5 0.5H9.5L11.5 3.5H25.5Q26.5 3.5 26.5 4.5V21.5Z" fill="url(#fo)" stroke="#d08838" stroke-width="1"/><path d="M0.8 21.7L4.5 9.5H30L26.5 21.7Z" fill="url(#fo2)" stroke="#cc7e30" stroke-width="1" stroke-linejoin="round"/></svg>
<div class="t" style="left:155.50px;top:280.02px;font-size:11.2px;color:#1e1e1e;">Деньги</div>
<div class="a" style="left:137px;top:319px;width:16px;height:1px;background:repeating-linear-gradient(90deg,#b8b0a8 0 1px,transparent 1px 2px)"></div>
<svg class="a" style="left:159px;top:304px" width="24" height="30" viewBox="0 0 24 30"><rect x="0.5" y="0.5" width="23" height="29" fill="#f4f6fb" stroke="#7b8cc4"/><rect x="3.5" y="3" width="16" height="5" fill="#9cc6ee" stroke="#5a8ccc" stroke-width="0.8"/><path d="M3.5 10.5H19.5" stroke="#6a7ab0" stroke-width="0.8"/><path d="M3.5 12.7H12.5" stroke="#6a7ab0" stroke-width="0.8"/><path d="M3.5 14.9H12.5" stroke="#6a7ab0" stroke-width="0.8"/><path d="M3.5 17.1H12.5" stroke="#6a7ab0" stroke-width="0.8"/><path d="M3.5 19.3H12.5" stroke="#6a7ab0" stroke-width="0.8"/><path d="M3.5 21.5H12.5" stroke="#6a7ab0" stroke-width="0.8"/><path d="M3.5 23.7H12.5" stroke="#6a7ab0" stroke-width="0.8"/><rect x="11" y="16.5" width="3.6" height="10" fill="#3c8ad8" stroke="#2a62a8" stroke-width="0.6"/><rect x="15.5" y="12.5" width="4" height="14" fill="#f5a040" stroke="#c87020" stroke-width="0.6"/></svg>
<div class="a" style="left:188px;top:303px;width:99px;height:35px;background:#00a8ff;border:1px dotted #e8782a"></div>
<div class="t" style="left:190.50px;top:315.02px;font-size:11.2px;color:#fff;">Платежи</div>
<div class="a" style="left:137px;top:354px;width:16px;height:1px;background:repeating-linear-gradient(90deg,#b8b0a8 0 1px,transparent 1px 2px)"></div>
<svg class="a" style="left:159px;top:339px" width="24" height="30" viewBox="0 0 24 30"><rect x="0.5" y="0.5" width="23" height="29" fill="#f4f6fb" stroke="#7b8cc4"/><rect x="3.5" y="3" width="16" height="5" fill="#9cc6ee" stroke="#5a8ccc" stroke-width="0.8"/><path d="M3.5 10.5H19.5" stroke="#6a7ab0" stroke-width="0.8"/><path d="M3.5 12.7H12.5" stroke="#6a7ab0" stroke-width="0.8"/><path d="M3.5 14.9H12.5" stroke="#6a7ab0" stroke-width="0.8"/><path d="M3.5 17.1H12.5" stroke="#6a7ab0" stroke-width="0.8"/><path d="M3.5 19.3H12.5" stroke="#6a7ab0" stroke-width="0.8"/><path d="M3.5 21.5H12.5" stroke="#6a7ab0" stroke-width="0.8"/><path d="M3.5 23.7H12.5" stroke="#6a7ab0" stroke-width="0.8"/><rect x="11" y="16.5" width="3.6" height="10" fill="#3c8ad8" stroke="#2a62a8" stroke-width="0.6"/><rect x="15.5" y="12.5" width="4" height="14" fill="#f5a040" stroke="#c87020" stroke-width="0.6"/></svg>
<div class="t" style="left:190.50px;top:350.02px;font-size:11.2px;color:#1e1e1e;">Прибыль</div>
<div class="a" style="left:137px;top:389px;width:16px;height:1px;background:repeating-linear-gradient(90deg,#b8b0a8 0 1px,transparent 1px 2px)"></div>
<svg class="a" style="left:159px;top:374px" width="24" height="30" viewBox="0 0 24 30"><rect x="0.5" y="0.5" width="23" height="29" fill="#f4f6fb" stroke="#7b8cc4"/><rect x="3.5" y="3" width="16" height="5" fill="#9cc6ee" stroke="#5a8ccc" stroke-width="0.8"/><path d="M3.5 10.5H19.5" stroke="#6a7ab0" stroke-width="0.8"/><path d="M3.5 12.7H12.5" stroke="#6a7ab0" stroke-width="0.8"/><path d="M3.5 14.9H12.5" stroke="#6a7ab0" stroke-width="0.8"/><path d="M3.5 17.1H12.5" stroke="#6a7ab0" stroke-width="0.8"/><path d="M3.5 19.3H12.5" stroke="#6a7ab0" stroke-width="0.8"/><path d="M3.5 21.5H12.5" stroke="#6a7ab0" stroke-width="0.8"/><path d="M3.5 23.7H12.5" stroke="#6a7ab0" stroke-width="0.8"/><rect x="11" y="16.5" width="3.6" height="10" fill="#3c8ad8" stroke="#2a62a8" stroke-width="0.6"/><rect x="15.5" y="12.5" width="4" height="14" fill="#f5a040" stroke="#c87020" stroke-width="0.6"/></svg>
<div class="t" style="left:190.50px;top:385.02px;font-size:11.2px;color:#1e1e1e;">Страховые</div>
<svg class="a" style="left:95.0px;top:418.0px" width="13" height="13" viewBox="0 0 13 13"><circle cx="6.5" cy="6.5" r="5.9" fill="none" stroke="#a4a4b4" stroke-width="1.1"/><path d="M3 6.5H9.5M6.8 3.8L9.5 6.5L6.8 9.2" fill="none" stroke="#a4a4b4" stroke-width="1.1"/></svg>
<div class="a" style="left:109px;top:423px;width:10px;height:1px;background:repeating-linear-gradient(90deg,#b8b0a8 0 1px,transparent 1px 2px)"></div>
<svg class="a" style="left:121px;top:413px" width="28" height="23" viewBox="0 0 28 23"><defs><linearGradient id="fb" x1="0" y1="0" x2="0" y2="1"><stop offset="0" stop-color="#fee6a8"/><stop offset="1" stop-color="#f9b554"/></linearGradient><linearGradient id="ff" x1="0" y1="0" x2="0" y2="1"><stop offset="0" stop-color="#ffd28a"/><stop offset="0.5" stop-color="#f9a542"/><stop offset="1" stop-color="#ee8418"/></linearGradient></defs><path d="M0.5 21.5V1.5Q0.5 0.5 1.5 0.5H9.5L11.5 3.5H25.5Q26 3.5 26 4.5V21.5Z" fill="url(#fb)" stroke="#d98a30" stroke-width="1"/><path d="M2.5 21.5V9Q2.5 8.5 3 8.5H26.5Q27 8.5 27 9V21Q27 21.5 26.5 21.5Z" fill="url(#ff)" stroke="#d5771c" stroke-width="1"/></svg>
<div class="t" style="left:155.50px;top:420.02px;font-size:11.2px;color:#1e1e1e;">Карта</div>
<svg class="a" style="left:95.0px;top:453.0px" width="13" height="13" viewBox="0 0 13 13"><circle cx="6.5" cy="6.5" r="5.9" fill="none" stroke="#a4a4b4" stroke-width="1.1"/><path d="M3 6.5H9.5M6.8 3.8L9.5 6.5L6.8 9.2" fill="none" stroke="#a4a4b4" stroke-width="1.1"/></svg>
<div class="a" style="left:109px;top:458px;width:10px;height:1px;background:repeating-linear-gradient(90deg,#b8b0a8 0 1px,transparent 1px 2px)"></div>
<svg class="a" style="left:121px;top:448px" width="28" height="23" viewBox="0 0 28 23"><defs><linearGradient id="fb" x1="0" y1="0" x2="0" y2="1"><stop offset="0" stop-color="#fee6a8"/><stop offset="1" stop-color="#f9b554"/></linearGradient><linearGradient id="ff" x1="0" y1="0" x2="0" y2="1"><stop offset="0" stop-color="#ffd28a"/><stop offset="0.5" stop-color="#f9a542"/><stop offset="1" stop-color="#ee8418"/></linearGradient></defs><path d="M0.5 21.5V1.5Q0.5 0.5 1.5 0.5H9.5L11.5 3.5H25.5Q26 3.5 26 4.5V21.5Z" fill="url(#fb)" stroke="#d98a30" stroke-width="1"/><path d="M2.5 21.5V9Q2.5 8.5 3 8.5H26.5Q27 8.5 27 9V21Q27 21.5 26.5 21.5Z" fill="url(#ff)" stroke="#d5771c" stroke-width="1"/></svg>
<div class="t" style="left:155.50px;top:455.02px;font-size:11.2px;color:#1e1e1e;">Медицина</div>
<svg class="a" style="left:95.0px;top:488.0px" width="13" height="13" viewBox="0 0 13 13"><circle cx="6.5" cy="6.5" r="5.9" fill="none" stroke="#a4a4b4" stroke-width="1.1"/><path d="M3 6.5H9.5M6.8 3.8L9.5 6.5L6.8 9.2" fill="none" stroke="#a4a4b4" stroke-width="1.1"/></svg>
<div class="a" style="left:109px;top:493px;width:10px;height:1px;background:repeating-linear-gradient(90deg,#b8b0a8 0 1px,transparent 1px 2px)"></div>
<svg class="a" style="left:121px;top:483px" width="28" height="23" viewBox="0 0 28 23"><defs><linearGradient id="fb" x1="0" y1="0" x2="0" y2="1"><stop offset="0" stop-color="#fee6a8"/><stop offset="1" stop-color="#f9b554"/></linearGradient><linearGradient id="ff" x1="0" y1="0" x2="0" y2="1"><stop offset="0" stop-color="#ffd28a"/><stop offset="0.5" stop-color="#f9a542"/><stop offset="1" stop-color="#ee8418"/></linearGradient></defs><path d="M0.5 21.5V1.5Q0.5 0.5 1.5 0.5H9.5L11.5 3.5H25.5Q26 3.5 26 4.5V21.5Z" fill="url(#fb)" stroke="#d98a30" stroke-width="1"/><path d="M2.5 21.5V9Q2.5 8.5 3 8.5H26.5Q27 8.5 27 9V21Q27 21.5 26.5 21.5Z" fill="url(#ff)" stroke="#d5771c" stroke-width="1"/></svg>
<div class="t" style="left:155.50px;top:490.02px;font-size:11.2px;color:#1e1e1e;">Пациенты</div>
<svg class="a" style="left:95.0px;top:523.0px" width="13" height="13" viewBox="0 0 13 13"><circle cx="6.5" cy="6.5" r="5.9" fill="none" stroke="#a4a4b4" stroke-width="1.1"/><path d="M3 6.5H9.5M6.8 3.8L9.5 6.5L6.8 9.2" fill="none" stroke="#a4a4b4" stroke-width="1.1"/></svg>
<div class="a" style="left:109px;top:528px;width:10px;height:1px;background:repeating-linear-gradient(90deg,#b8b0a8 0 1px,transparent 1px 2px)"></div>
<svg class="a" style="left:121px;top:518px" width="28" height="23" viewBox="0 0 28 23"><defs><linearGradient id="fb" x1="0" y1="0" x2="0" y2="1"><stop offset="0" stop-color="#fee6a8"/><stop offset="1" stop-color="#f9b554"/></linearGradient><linearGradient id="ff" x1="0" y1="0" x2="0" y2="1"><stop offset="0" stop-color="#ffd28a"/><stop offset="0.5" stop-color="#f9a542"/><stop offset="1" stop-color="#ee8418"/></linearGradient></defs><path d="M0.5 21.5V1.5Q0.5 0.5 1.5 0.5H9.5L11.5 3.5H25.5Q26 3.5 26 4.5V21.5Z" fill="url(#fb)" stroke="#d98a30" stroke-width="1"/><path d="M2.5 21.5V9Q2.5 8.5 3 8.5H26.5Q27 8.5 27 9V21Q27 21.5 26.5 21.5Z" fill="url(#ff)" stroke="#d5771c" stroke-width="1"/></svg>
<div class="t" style="left:155.50px;top:525.02px;font-size:11.2px;color:#1e1e1e;">Рассылка</div>
<svg class="a" style="left:95.0px;top:558.0px" width="13" height="13" viewBox="0 0 13 13"><circle cx="6.5" cy="6.5" r="5.9" fill="none" stroke="#a4a4b4" stroke-width="1.1"/><path d="M3 6.5H9.5M6.8 3.8L9.5 6.5L6.8 9.2" fill="none" stroke="#a4a4b4" stroke-width="1.1"/></svg>
<div class="a" style="left:109px;top:563px;width:10px;height:1px;background:repeating-linear-gradient(90deg,#b8b0a8 0 1px,transparent 1px 2px)"></div>
<svg class="a" style="left:121px;top:553px" width="28" height="23" viewBox="0 0 28 23"><defs><linearGradient id="fb" x1="0" y1="0" x2="0" y2="1"><stop offset="0" stop-color="#fee6a8"/><stop offset="1" stop-color="#f9b554"/></linearGradient><linearGradient id="ff" x1="0" y1="0" x2="0" y2="1"><stop offset="0" stop-color="#ffd28a"/><stop offset="0.5" stop-color="#f9a542"/><stop offset="1" stop-color="#ee8418"/></linearGradient></defs><path d="M0.5 21.5V1.5Q0.5 0.5 1.5 0.5H9.5L11.5 3.5H25.5Q26 3.5 26 4.5V21.5Z" fill="url(#fb)" stroke="#d98a30" stroke-width="1"/><path d="M2.5 21.5V9Q2.5 8.5 3 8.5H26.5Q27 8.5 27 9V21Q27 21.5 26.5 21.5Z" fill="url(#ff)" stroke="#d5771c" stroke-width="1"/></svg>
<div class="t" style="left:155.50px;top:560.02px;font-size:11.2px;color:#1e1e1e;">Склад</div>
<svg class="a" style="left:95.0px;top:593.0px" width="13" height="13" viewBox="0 0 13 13"><circle cx="6.5" cy="6.5" r="5.9" fill="none" stroke="#a4a4b4" stroke-width="1.1"/><path d="M3 6.5H9.5M6.8 3.8L9.5 6.5L6.8 9.2" fill="none" stroke="#a4a4b4" stroke-width="1.1"/></svg>
<div class="a" style="left:109px;top:598px;width:10px;height:1px;background:repeating-linear-gradient(90deg,#b8b0a8 0 1px,transparent 1px 2px)"></div>
<svg class="a" style="left:121px;top:588px" width="28" height="23" viewBox="0 0 28 23"><defs><linearGradient id="fb" x1="0" y1="0" x2="0" y2="1"><stop offset="0" stop-color="#fee6a8"/><stop offset="1" stop-color="#f9b554"/></linearGradient><linearGradient id="ff" x1="0" y1="0" x2="0" y2="1"><stop offset="0" stop-color="#ffd28a"/><stop offset="0.5" stop-color="#f9a542"/><stop offset="1" stop-color="#ee8418"/></linearGradient></defs><path d="M0.5 21.5V1.5Q0.5 0.5 1.5 0.5H9.5L11.5 3.5H25.5Q26 3.5 26 4.5V21.5Z" fill="url(#fb)" stroke="#d98a30" stroke-width="1"/><path d="M2.5 21.5V9Q2.5 8.5 3 8.5H26.5Q27 8.5 27 9V21Q27 21.5 26.5 21.5Z" fill="url(#ff)" stroke="#d5771c" stroke-width="1"/></svg>
<div class="t" style="left:155.50px;top:595.02px;font-size:11.2px;color:#1e1e1e;">Сотрудники</div>
<svg class="a" style="left:95.0px;top:628.0px" width="13" height="13" viewBox="0 0 13 13"><circle cx="6.5" cy="6.5" r="5.9" fill="none" stroke="#a4a4b4" stroke-width="1.1"/><path d="M3 6.5H9.5M6.8 3.8L9.5 6.5L6.8 9.2" fill="none" stroke="#a4a4b4" stroke-width="1.1"/></svg>
<div class="a" style="left:109px;top:633px;width:10px;height:1px;background:repeating-linear-gradient(90deg,#b8b0a8 0 1px,transparent 1px 2px)"></div>
<svg class="a" style="left:121px;top:623px" width="28" height="23" viewBox="0 0 28 23"><defs><linearGradient id="fb" x1="0" y1="0" x2="0" y2="1"><stop offset="0" stop-color="#fee6a8"/><stop offset="1" stop-color="#f9b554"/></linearGradient><linearGradient id="ff" x1="0" y1="0" x2="0" y2="1"><stop offset="0" stop-color="#ffd28a"/><stop offset="0.5" stop-color="#f9a542"/><stop offset="1" stop-color="#ee8418"/></linearGradient></defs><path d="M0.5 21.5V1.5Q0.5 0.5 1.5 0.5H9.5L11.5 3.5H25.5Q26 3.5 26 4.5V21.5Z" fill="url(#fb)" stroke="#d98a30" stroke-width="1"/><path d="M2.5 21.5V9Q2.5 8.5 3 8.5H26.5Q27 8.5 27 9V21Q27 21.5 26.5 21.5Z" fill="url(#ff)" stroke="#d5771c" stroke-width="1"/></svg>
<div class="t" style="left:155.50px;top:630.02px;font-size:11.2px;color:#1e1e1e;">Услуги</div>
<svg class="a" style="left:264px;top:684px" width="14" height="14" viewBox="0 0 14 14"><circle cx="5.5" cy="5.5" r="4.2" fill="none" stroke="#1a5fae" stroke-width="2.2"/><path d="M8.5 8.5L12.5 12.5" stroke="#1a5fae" stroke-width="3" stroke-linecap="round"/></svg>
<div class="a" style="left:297px;top:141px;width:1px;height:16px;background:#a8a8a8"></div>
<div class="a" style="left:299px;top:141px;width:1px;height:16px;background:#a8a8a8"></div>
<svg class="a" style="left:305px;top:133px" width="31" height="30" viewBox="0 0 31 30"><rect x="7.5" y="0.5" width="16" height="11" fill="#f4f6fa" stroke="#9aa4b4"/><path d="M1 11Q1 9 3 9H28Q30 9 30 11V22H1Z" fill="#e2e6ee" stroke="#8f9aae"/><rect x="3" y="12" width="25" height="4" fill="#7f8aa0"/><rect x="6.5" y="18.5" width="18" height="10" fill="#fafcff" stroke="#8f9aae"/><rect x="8" y="23" width="15" height="4" fill="#9cc7ee"/></svg>
<div class="t" style="left:341.00px;top:144.27px;font-size:11.5px;color:#222;transform:scaleX(1.0029);transform-origin:0 0;">Печать...</div>
<div class="a" style="left:396px;top:131px;width:1px;height:35px;background:#a0a0a0"></div>
<svg class="a" style="left:404px;top:134px" width="30" height="28" viewBox="0 0 30 28"><path d="M0.5 26.5V6.5Q0.5 5.5 1.5 5.5H8.5L10.5 8.5H22.5Q23.5 8.5 23.5 9.5V26.5Z" fill="#f6d79a" stroke="#d0a050"/><path d="M0.8 26.7L4.5 13.5H29L25.5 26.7Z" fill="#f5c878" stroke="#cc9040" stroke-linejoin="round"/><path d="M14 6Q19 0 25 4L27 1.5L28 10L20 9L22.5 6.8Q18.5 4 14 6Z" fill="#8cc860" stroke="#5a9a34" stroke-width="0.6"/></svg>
<svg class="a" style="left:445px;top:135px" width="27" height="27" viewBox="0 0 27 27"><path d="M0.5 2.5Q0.5 0.5 2.5 0.5H22L26.5 5V24.5Q26.5 26.5 24.5 26.5H2.5Q0.5 26.5 0.5 24.5Z" fill="#6e7686" stroke="#565e6e"/><rect x="6" y="1" width="14" height="9" fill="#e8ecf2"/><rect x="15" y="2.5" width="3.5" height="6" fill="#565e6e"/><rect x="5" y="14" width="17" height="12" fill="#f4f6fa"/><path d="M7 17.5H20M7 20.5H20" stroke="#a8b0c0"/><rect x="5" y="23" width="17" height="3" fill="#9cc7ee"/></svg>
<svg class="a" style="left:481px;top:134px" width="31" height="29" viewBox="0 0 31 29"><path d="M7.5 0.5H20L27.5 8V27.5H7.5Z" fill="#f8f8fb" stroke="#a8b0c4"/><path d="M20 0.5V8H27.5" fill="#fff" stroke="#a8b0c4"/><rect x="0.5" y="5" width="15" height="8" fill="#5aaa44"/><text x="8" y="11.6" font-size="6.4" font-weight="bold" fill="#fff" text-anchor="middle" font-family="Liberation Sans">XLS</text><path d="M15.5 17.5Q15.5 16.5 16.5 16.5H28L30.5 19V28.5H15.5Z" fill="#6e7686" stroke="#565e6e"/><rect x="19" y="17" width="7" height="4" fill="#e8ecf2"/><rect x="18" y="23" width="10" height="5" fill="#f4f6fa"/></svg>
<div class="t" style="left:517.00px;top:143.27px;font-size:11.5px;color:#222;transform:scaleX(1.0421);transform-origin:0 0;">Экспорт</div>
<svg class="a" style="left:565px;top:146px" width="6" height="4" viewBox="0 0 6 4"><path d="M0 0H6L3 3.5Z" fill="#333"/></svg>
<div class="a" style="left:579px;top:131px;width:1px;height:35px;background:#a0a0a0"></div>
<svg class="a" style="left:592px;top:134px" width="25" height="28" viewBox="0 0 25 28"><rect x="0.5" y="0.5" width="19" height="23" fill="#f6f8fc" stroke="#8ea2cc"/><path d="M3.5 5H16M3.5 9H12M3.5 13H9M3.5 17H8" stroke="#a8b8d8"/><rect x="8" y="6.5" width="8" height="3" fill="#f5c078" stroke="#d89030" stroke-width="0.6"/><rect x="3" y="14.5" width="7" height="3" fill="#f5c078" stroke="#d89030" stroke-width="0.6"/><path d="M11 20L4 27" stroke="#c89060" stroke-width="2.6" stroke-linecap="round"/><circle cx="16.5" cy="15" r="6.5" fill="#dcecf8" stroke="#9aaac4" stroke-width="1.2"/></svg>
<div class="a" style="left:625px;top:131px;width:1px;height:35px;background:#a0a0a0"></div>
<svg class="a" style="left:634px;top:135px" width="29" height="29" viewBox="0 0 29 29"><path d="M20 20L26 26.5" stroke="#e0a050" stroke-width="3.6" stroke-linecap="round"/><circle cx="12.5" cy="12.5" r="11.5" fill="#e8eef8" stroke="#9aaad0" stroke-width="1.2"/><circle cx="12.5" cy="12.5" r="8.5" fill="#a8c8f0" stroke="#7898d0"/><path d="M8 12.5H17M12.5 8V17" stroke="#3a6ab8" stroke-width="2.4"/></svg>
<div class="a" style="left:668px;top:138px;width:81px;height:22px;border:1px solid #b8b8b8;background:#fff"></div>
<div class="t" style="left:671.00px;top:144.07px;font-size:11.5px;color:#222;transform:scaleX(1.1549);transform-origin:0 0;">100%</div>
<svg class="a" style="left:737px;top:147px" width="7" height="4" viewBox="0 0 7 4"><path d="M0 0H7L3.5 4Z" fill="#555"/></svg>
<svg class="a" style="left:754px;top:135px" width="29" height="29" viewBox="0 0 29 29"><path d="M20 20L26 26.5" stroke="#e0a050" stroke-width="3.6" stroke-linecap="round"/><circle cx="12.5" cy="12.5" r="11.5" fill="#e8eef8" stroke="#9aaad0" stroke-width="1.2"/><circle cx="12.5" cy="12.5" r="8.5" fill="#a8c8f0" stroke="#7898d0"/><path d="M8 12.5H17" stroke="#3a6ab8" stroke-width="2.4"/></svg>
<div class="a" style="left:791px;top:131px;width:1px;height:35px;background:#a0a0a0"></div>
<svg class="a" style="left:801px;top:133px" width="27" height="32" viewBox="0 0 27 32"><rect x="0.5" y="0.5" width="14" height="8" rx="1" fill="#f8d290" stroke="#d09840"/><path d="M6.5 9V27.5H13M6.5 18.5H13" fill="none" stroke="#556070" stroke-width="1.2"/><rect x="12.5" y="14.5" width="14" height="8" rx="1" fill="#f8d290" stroke="#d09840"/><rect x="12.5" y="23.5" width="14" height="8" rx="1" fill="#f8d290" stroke="#d09840"/></svg>
<svg class="a" style="left:838px;top:134px" width="30" height="29" viewBox="0 0 30 29"><rect x="0.5" y="0.5" width="28" height="28" rx="1.5" fill="#eef2fa" stroke="#9aa8c8"/><rect x="1" y="1" width="8.5" height="27" fill="#8cc45c"/></svg>
<svg class="a" style="left:879px;top:134px" width="26" height="30" viewBox="0 0 26 30"><path d="M1 0.5H16L23 7.5V26.5H1Z" fill="#eef2fa" stroke="#9aaad0"/><path d="M16 0.5V7.5H23" fill="#fff" stroke="#9aaad0"/><path d="M13 17L22.5 27" stroke="#6e7e9e" stroke-width="5" stroke-linecap="round"/><path d="M13 17L22.5 27" stroke="#c8d0dc" stroke-width="3" stroke-linecap="round"/><circle cx="10.4" cy="14.6" r="5.6" fill="#c8d0dc" stroke="#6e7e9e" stroke-width="1.1"/><path d="M4.5 12L8.5 14L11 11.5L9 7.5Z" fill="#eef2fa" stroke="#6e7e9e" stroke-width="0.8" stroke-linejoin="round"/></svg>
<svg class="a" style="left:919px;top:134px" width="28" height="30" viewBox="0 0 28 30"><path d="M0.5 1.3V23.5H22.6Z" fill="#f6d492" stroke="#c89448" stroke-linejoin="round"/><path d="M5.4 12.9V18.2H11Z" fill="#fff" stroke="#c89448" stroke-width="0.8"/><path d="M24.5 8L28 11.5L9.5 28.5L5.5 29.5L6.5 25.5Z" fill="#f5c060" stroke="#b07a30" stroke-width="0.9" stroke-linejoin="round"/><path d="M24.5 8L28 11.5L25.8 13.6L22.3 10.1Z" fill="#e05a50"/><path d="M21.5 11L25 14.5" stroke="#6a90c8" stroke-width="1.2"/></svg>
<div class="a" style="left:954px;top:131px;width:1px;height:35px;background:#a0a0a0"></div>
<svg class="a" style="left:966px;top:139px" width="22" height="20" viewBox="0 0 22 20"><rect x="0.5" y="1.5" width="3" height="17" fill="#c4ddf6" stroke="#7aa4d8" stroke-width="1"/><path d="M21 0.8V18.2L6 9.5Z" fill="#c4ddf6" stroke="#7aa4d8" stroke-width="1"/></svg>
<svg class="a" style="left:1005px;top:139px" width="19" height="20" viewBox="0 0 19 20"><path d="M18 0.8V18.2L1 9.5Z" fill="#c4ddf6" stroke="#7aa4d8" stroke-width="1"/></svg>
<div class="a" style="left:1036px;top:138px;width:36px;height:22px;border:1px solid #c0c0c0;background:#fff"></div>
<div class="t" style="left:1040.00px;top:143.07px;font-size:11.5px;color:#222;">1</div>
<svg class="a" style="left:1084px;top:139px" width="18" height="20" viewBox="0 0 18 20"><path d="M0.8 0.8V18.2L17 9.5Z" fill="#c4ddf6" stroke="#7aa4d8" stroke-width="1"/></svg>
<svg class="a" style="left:1120px;top:139px" width="22" height="20" viewBox="0 0 22 20"><path d="M0.8 0.8V18.2L16 9.5Z" fill="#c4ddf6" stroke="#7aa4d8" stroke-width="1"/><rect x="17.5" y="1.5" width="3" height="17" fill="#c4ddf6" stroke="#7aa4d8" stroke-width="1"/></svg>
<div class="a" style="left:1153px;top:131px;width:1px;height:35px;background:#a0a0a0"></div>
<svg class="a" style="left:1160px;top:134px" width="31" height="30" viewBox="0 0 31 30"><circle cx="15.4" cy="14.6" r="14" fill="#f0a898" stroke="#d87a6a"/><circle cx="15.4" cy="14.6" r="11.6" fill="#e88878"/><circle cx="15.4" cy="14.6" r="10.3" fill="#f0f4fa" stroke="#c87868" stroke-width="0.8"/><g fill="#5a6888"><circle cx="15.4" cy="5.6" r="0.6"/><circle cx="9.5" cy="8.6" r="0.8"/><circle cx="24.4" cy="14.6" r="0.8"/><circle cx="9.5" cy="20.5" r="0.8"/><circle cx="21.5" cy="20.5" r="0.8"/></g><path d="M15.4 14.6L21.8 8" stroke="#4a5a78" stroke-width="1.1"/><path d="M15.4 14.6H7.6" stroke="#c85a4a" stroke-width="1.2"/><path d="M15.4 14.6V23.5" stroke="#4a5a78" stroke-width="1.3"/><circle cx="15.4" cy="14.6" r="1.3" fill="#fff" stroke="#4a5a78" stroke-width="0.8"/></svg>
<svg class="a" style="left:1214px;top:143px" width="13" height="13" viewBox="0 0 13 13"><circle cx="6.5" cy="6.5" r="5.9" fill="none" stroke="#b8b8b8" stroke-width="1.1"/><path d="M3.9 3.9L8.84 8.84M8.84 4.94V8.84H4.94" fill="none" stroke="#b8b8b8" stroke-width="1.1"/></svg>
<div class="a" style="left:1236px;top:130px;width:21px;height:91px;background:#f0f0f0;border:1px solid #b4b4b4"></div>
<svg class="a" style="left:1240px;top:134px" width="15" height="15" viewBox="0 0 15 15"><rect x="0.5" y="0.5" width="9" height="10" fill="#f4f6fb" stroke="#7a8cc0"/><path d="M2 3H8M2 5H8M2 7H8" stroke="#8a9ac8" stroke-width="0.8"/><rect x="5" y="3.5" width="9.5" height="11" rx="1" fill="#3f7fd0" stroke="#2a5aa8"/><text x="9.8" y="12.6" font-size="9" font-weight="bold" fill="#fff" text-anchor="middle" font-family="Liberation Sans">?</text></svg>
<div class="t" style="left:1253.5px;top:157.70px;font-size:11.2px;color:#3a3a50;transform:rotate(90deg) scaleX(0.9832);transform-origin:0 0">Инструкция</div>
<div class="a" style="left:291px;top:173px;width:942px;height:2px;background:#6e6e6e"></div>
<div class="a" style="left:291px;top:173px;width:2px;height:511px;background:#6e6e6e"></div>
<div class="a" style="left:293px;top:175px;width:922px;height:509px;background:#ababab"></div>
<div class="a" style="left:1215px;top:175px;width:18px;height:509px;background:#f0f0f0"></div>
<div class="a" style="left:1216px;top:260px;width:15px;height:106px;background:#cdcdcd"></div>
<svg class="a" style="left:1220px;top:181px" width="8" height="6" viewBox="0 0 8 6"><path d="M0.8 5L4 1.5L7.2 5" fill="none" stroke="#444" stroke-width="1.6"/></svg>
<svg class="a" style="left:1220px;top:673px" width="8" height="6" viewBox="0 0 8 6"><path d="M0.8 1L4 4.5L7.2 1" fill="none" stroke="#444" stroke-width="1.6"/></svg>
<div class="a" style="left:291px;top:684px;width:942px;height:1px;background:#e4e4e4"></div>
<div class="a" style="left:293px;top:175px;width:922px;height:509px;overflow:hidden"><div class="a" style="left:-293px;top:-175px;width:1279px;height:788px">
<div class="a" style="left:352px;top:175px;width:2px;height:520px;background:#f7c12c"></div>
<div class="a" style="left:354px;top:175px;width:793px;height:520px;background:#fff"></div>
<div class="a" style="left:1147px;top:175px;width:1px;height:520px;background:#888"></div>
<div class="a" style="left:1148px;top:175px;width:2px;height:520px;background:#f7c12c"></div>
<div class="t" style="left:643.10px;top:184.34px;font-size:15.9px;color:#000;font-weight:bold;transform:scaleX(0.9908);transform-origin:0 0;">Детально</div>
<div class="a" style="left:392px;top:208px;width:718px;height:31px;background:#aad4fc"></div>
<div class="a" style="left:392px;top:208px;width:719px;height:1px;background:#000"></div>
<div class="a" style="left:494px;top:223px;width:144px;height:1px;background:#000"></div>
<div class="a" style="left:392px;top:208px;width:1px;height:31px;background:#000"></div>
<div class="a" style="left:422px;top:208px;width:1px;height:31px;background:#000"></div>
<div class="a" style="left:494px;top:208px;width:1px;height:31px;background:#000"></div>
<div class="a" style="left:637px;top:208px;width:1px;height:31px;background:#000"></div>
<div class="a" style="left:928px;top:208px;width:1px;height:31px;background:#000"></div>
<div class="a" style="left:1019px;top:208px;width:1px;height:31px;background:#000"></div>
<div class="a" style="left:1110px;top:208px;width:1px;height:31px;background:#000"></div>
<div class="a" style="left:588px;top:223px;width:1px;height:16px;background:#000"></div>
<div class="t" style="left:404.06px;top:220.03px;font-size:10px;color:#000;font-weight:bold;transform:scaleX(1.0600);transform-origin:0 0;">#</div>
<div class="t" style="left:445.68px;top:220.03px;font-size:10px;color:#000;font-weight:bold;transform:scaleX(1.0600);transform-origin:0 0;">Дата</div>
<div class="t" style="left:541.26px;top:211.03px;font-size:10px;color:#000;font-weight:bold;transform:scaleX(1.0600);transform-origin:0 0;">Действие</div>
<div class="t" style="left:530.56px;top:226.53px;font-size:10px;color:#000;font-weight:bold;transform:scaleX(1.0600);transform-origin:0 0;">Вид</div>
<div class="t" style="left:607.78px;top:226.53px;font-size:10px;color:#000;font-weight:bold;transform:scaleX(1.0600);transform-origin:0 0;">Id</div>
<div class="t" style="left:750.04px;top:220.03px;font-size:10px;color:#000;font-weight:bold;transform:scaleX(1.0600);transform-origin:0 0;">Примечание</div>
<div class="t" style="left:953.84px;top:220.03px;font-size:10px;color:#000;font-weight:bold;transform:scaleX(1.0600);transform-origin:0 0;">Приход</div>
<div class="t" style="left:1045.87px;top:220.03px;font-size:10px;color:#000;font-weight:bold;transform:scaleX(1.0600);transform-origin:0 0;">Расход</div>
<div class="a" style="left:392px;top:238px;width:719px;height:1px;background:#000"></div>
<div class="a" style="left:392px;top:238px;width:1px;height:18px;background:#000"></div>
<div class="a" style="left:1110px;top:238px;width:1px;height:18px;background:#000"></div>
<div class="t" style="left:394.50px;top:242.13px;font-size:10px;color:#000;font-weight:bold;transform:scaleX(1.0500);transform-origin:0 0;">Банковская карта</div>
<div class="a" style="left:392px;top:255px;width:719px;height:1px;background:#000"></div>
<div class="a" style="left:392px;top:255px;width:1px;height:18px;background:#000"></div>
<div class="a" style="left:1110px;top:255px;width:1px;height:18px;background:#000"></div>
<div class="a" style="left:392px;top:272px;width:719px;height:1px;background:#000"></div>
<div class="a" style="left:392px;top:272px;width:1px;height:17px;background:#000"></div>
<div class="a" style="left:422px;top:272px;width:1px;height:17px;background:#000"></div>
<div class="a" style="left:494px;top:272px;width:1px;height:17px;background:#000"></div>
<div class="a" style="left:588px;top:272px;width:1px;height:17px;background:#000"></div>
<div class="a" style="left:637px;top:272px;width:1px;height:17px;background:#000"></div>
<div class="a" style="left:928px;top:272px;width:1px;height:17px;background:#000"></div>
<div class="a" style="left:1019px;top:272px;width:1px;height:17px;background:#000"></div>
<div class="a" style="left:1110px;top:272px;width:1px;height:17px;background:#000"></div>
<div class="t" style="left:404.11px;top:276.04px;font-size:10px;color:#000;transform:scaleX(1.0400);transform-origin:0 0;">1</div>
<div class="t" style="left:431.77px;top:276.04px;font-size:10px;color:#000;transform:scaleX(1.0720);transform-origin:0 0;">01.05.2022</div>
<div class="t" style="left:496.20px;top:276.04px;font-size:10px;color:#000;transform:scaleX(1.0700);transform-origin:0 0;">Услуга</div>
<div class="t" style="left:618.83px;top:276.04px;font-size:10px;color:#000;transform:scaleX(1.0400);transform-origin:0 0;">554</div>
<div class="t" style="left:639.70px;top:276.04px;font-size:10px;color:#000;transform:scaleX(1.0700);transform-origin:0 0;">Иванов Иван - Прием врача терапевта первичный</div>
<div class="t" style="left:976.22px;top:277.04px;font-size:10px;color:#000;transform:scaleX(1.0650);transform-origin:0 0;">7 000.00</div>
<div class="a" style="left:392px;top:288px;width:719px;height:1px;background:#000"></div>
<div class="a" style="left:392px;top:288px;width:1px;height:17px;background:#000"></div>
<div class="a" style="left:422px;top:288px;width:1px;height:17px;background:#000"></div>
<div class="a" style="left:494px;top:288px;width:1px;height:17px;background:#000"></div>
<div class="a" style="left:588px;top:288px;width:1px;height:17px;background:#000"></div>
<div class="a" style="left:637px;top:288px;width:1px;height:17px;background:#000"></div>
<div class="a" style="left:928px;top:288px;width:1px;height:17px;background:#000"></div>
<div class="a" style="left:1019px;top:288px;width:1px;height:17px;background:#000"></div>
<div class="a" style="left:1110px;top:288px;width:1px;height:17px;background:#000"></div>
<div class="t" style="left:404.11px;top:292.04px;font-size:10px;color:#000;transform:scaleX(1.0400);transform-origin:0 0;">2</div>
<div class="t" style="left:431.77px;top:292.04px;font-size:10px;color:#000;transform:scaleX(1.0720);transform-origin:0 0;">02.06.2022</div>
<div class="t" style="left:496.20px;top:292.04px;font-size:10px;color:#000;transform:scaleX(1.0700);transform-origin:0 0;">Услуга</div>
<div class="t" style="left:618.83px;top:292.04px;font-size:10px;color:#000;transform:scaleX(1.0400);transform-origin:0 0;">555</div>
<div class="t" style="left:639.70px;top:292.04px;font-size:10px;color:#000;transform:scaleX(1.0700);transform-origin:0 0;">Дудкина Елена - Прием врача стоматолога повторный</div>
<div class="t" style="left:976.22px;top:293.04px;font-size:10px;color:#000;transform:scaleX(1.0650);transform-origin:0 0;">3 000.00</div>
<div class="a" style="left:392px;top:304px;width:719px;height:1px;background:#000"></div>
<div class="a" style="left:392px;top:304px;width:1px;height:17px;background:#000"></div>
<div class="a" style="left:422px;top:304px;width:1px;height:17px;background:#000"></div>
<div class="a" style="left:494px;top:304px;width:1px;height:17px;background:#000"></div>
<div class="a" style="left:588px;top:304px;width:1px;height:17px;background:#000"></div>
<div class="a" style="left:637px;top:304px;width:1px;height:17px;background:#000"></div>
<div class="a" style="left:928px;top:304px;width:1px;height:17px;background:#000"></div>
<div class="a" style="left:1019px;top:304px;width:1px;height:17px;background:#000"></div>
<div class="a" style="left:1110px;top:304px;width:1px;height:17px;background:#000"></div>
<div class="t" style="left:404.11px;top:308.04px;font-size:10px;color:#000;transform:scaleX(1.0400);transform-origin:0 0;">3</div>
<div class="t" style="left:431.77px;top:308.04px;font-size:10px;color:#000;transform:scaleX(1.0720);transform-origin:0 0;">09.09.2022</div>
<div class="t" style="left:496.20px;top:308.04px;font-size:10px;color:#000;transform:scaleX(1.0700);transform-origin:0 0;">Услуга</div>
<div class="t" style="left:618.83px;top:308.04px;font-size:10px;color:#000;transform:scaleX(1.0400);transform-origin:0 0;">621</div>
<div class="t" style="left:639.70px;top:308.04px;font-size:10px;color:#000;transform:scaleX(1.0700);transform-origin:0 0;">Кукушкина Анна - Прием врача стоматолога повторный</div>
<div class="t" style="left:976.22px;top:309.04px;font-size:10px;color:#000;transform:scaleX(1.0650);transform-origin:0 0;">2 750.00</div>
<div class="a" style="left:392px;top:320px;width:719px;height:1px;background:#000"></div>
<div class="a" style="left:392px;top:320px;width:1px;height:17px;background:#000"></div>
<div class="a" style="left:422px;top:320px;width:1px;height:17px;background:#000"></div>
<div class="a" style="left:494px;top:320px;width:1px;height:17px;background:#000"></div>
<div class="a" style="left:588px;top:320px;width:1px;height:17px;background:#000"></div>
<div class="a" style="left:637px;top:320px;width:1px;height:17px;background:#000"></div>
<div class="a" style="left:928px;top:320px;width:1px;height:17px;background:#000"></div>
<div class="a" style="left:1019px;top:320px;width:1px;height:17px;background:#000"></div>
<div class="a" style="left:1110px;top:320px;width:1px;height:17px;background:#000"></div>
<div class="t" style="left:404.11px;top:324.04px;font-size:10px;color:#000;transform:scaleX(1.0400);transform-origin:0 0;">4</div>
<div class="t" style="left:431.77px;top:324.04px;font-size:10px;color:#000;transform:scaleX(1.0720);transform-origin:0 0;">13.09.2022</div>
<div class="t" style="left:496.20px;top:324.04px;font-size:10px;color:#000;transform:scaleX(1.0700);transform-origin:0 0;">Деньги</div>
<div class="t" style="left:624.66px;top:324.04px;font-size:10px;color:#000;transform:scaleX(1.0400);transform-origin:0 0;">43</div>
<div class="t" style="left:639.70px;top:324.04px;font-size:10px;color:#000;transform:scaleX(1.0700);transform-origin:0 0;">Частный - Снятие</div>
<div class="t" style="left:1061.51px;top:325.04px;font-size:10px;color:#000;transform:scaleX(1.0650);transform-origin:0 0;">10 000.00</div>
<div class="a" style="left:393px;top:336px;width:717px;height:17px;background:#dcdcdc"></div>
<div class="a" style="left:392px;top:336px;width:719px;height:1px;background:#000"></div>
<div class="a" style="left:392px;top:336px;width:1px;height:18px;background:#000"></div>
<div class="a" style="left:928px;top:336px;width:1px;height:18px;background:#000"></div>
<div class="a" style="left:1019px;top:336px;width:1px;height:18px;background:#000"></div>
<div class="a" style="left:1110px;top:336px;width:1px;height:18px;background:#000"></div>
<div class="t" style="left:847.36px;top:341.74px;font-size:10px;color:#000;font-weight:bold;transform:scaleX(1.0500);transform-origin:0 0;">По сотруднику</div>
<div class="t" style="left:969.98px;top:341.74px;font-size:10px;color:#000;font-weight:bold;transform:scaleX(1.0500);transform-origin:0 0;">12 750.00</div>
<div class="t" style="left:1062.18px;top:341.74px;font-size:10px;color:#000;font-weight:bold;transform:scaleX(1.0500);transform-origin:0 0;">10 000.00</div>
<div class="a" style="left:392px;top:353px;width:719px;height:1px;background:#000"></div>
<div class="a" style="left:392px;top:353px;width:1px;height:18px;background:#000"></div>
<div class="a" style="left:1110px;top:353px;width:1px;height:18px;background:#000"></div>
<div class="t" style="left:424.50px;top:357.14px;font-size:10px;color:#000;font-weight:bold;transform:scaleX(1.0500);transform-origin:0 0;">Программист</div>
<div class="a" style="left:392px;top:370px;width:719px;height:1px;background:#000"></div>
<div class="a" style="left:392px;top:370px;width:1px;height:17px;background:#000"></div>
<div class="a" style="left:422px;top:370px;width:1px;height:17px;background:#000"></div>
<div class="a" style="left:494px;top:370px;width:1px;height:17px;background:#000"></div>
<div class="a" style="left:588px;top:370px;width:1px;height:17px;background:#000"></div>
<div class="a" style="left:637px;top:370px;width:1px;height:17px;background:#000"></div>
<div class="a" style="left:928px;top:370px;width:1px;height:17px;background:#000"></div>
<div class="a" style="left:1019px;top:370px;width:1px;height:17px;background:#000"></div>
<div class="a" style="left:1110px;top:370px;width:1px;height:17px;background:#000"></div>
<div class="t" style="left:404.11px;top:374.04px;font-size:10px;color:#000;transform:scaleX(1.0400);transform-origin:0 0;">5</div>
<div class="t" style="left:431.77px;top:374.04px;font-size:10px;color:#000;transform:scaleX(1.0720);transform-origin:0 0;">06.06.2022</div>
<div class="t" style="left:496.20px;top:374.04px;font-size:10px;color:#000;transform:scaleX(1.0700);transform-origin:0 0;">Продажа</div>
<div class="t" style="left:624.66px;top:374.04px;font-size:10px;color:#000;transform:scaleX(1.0400);transform-origin:0 0;">62</div>
<div class="t" style="left:639.70px;top:374.04px;font-size:10px;color:#000;transform:scaleX(1.0700);transform-origin:0 0;">Иванов Иван</div>
<div class="t" style="left:976.22px;top:375.04px;font-size:10px;color:#000;transform:scaleX(1.0650);transform-origin:0 0;">2 000.00</div>
<div class="a" style="left:393px;top:386px;width:717px;height:17px;background:#dcdcdc"></div>
<div class="a" style="left:392px;top:386px;width:719px;height:1px;background:#000"></div>
<div class="a" style="left:392px;top:386px;width:1px;height:18px;background:#000"></div>
<div class="a" style="left:928px;top:386px;width:1px;height:18px;background:#000"></div>
<div class="a" style="left:1019px;top:386px;width:1px;height:18px;background:#000"></div>
<div class="a" style="left:1110px;top:386px;width:1px;height:18px;background:#000"></div>
<div class="t" style="left:847.36px;top:391.74px;font-size:10px;color:#000;font-weight:bold;transform:scaleX(1.0500);transform-origin:0 0;">По сотруднику</div>
<div class="t" style="left:975.80px;top:391.74px;font-size:10px;color:#000;font-weight:bold;transform:scaleX(1.0500);transform-origin:0 0;">2 000.00</div>
<div class="t" style="left:1088.48px;top:391.74px;font-size:10px;color:#000;font-weight:bold;transform:scaleX(1.0500);transform-origin:0 0;">0.00</div>
<div class="a" style="left:393px;top:403px;width:717px;height:17px;background:#c8c8c8"></div>
<div class="a" style="left:392px;top:403px;width:719px;height:1px;background:#000"></div>
<div class="a" style="left:392px;top:403px;width:1px;height:18px;background:#000"></div>
<div class="a" style="left:928px;top:403px;width:1px;height:18px;background:#000"></div>
<div class="a" style="left:1019px;top:403px;width:1px;height:18px;background:#000"></div>
<div class="a" style="left:1110px;top:403px;width:1px;height:18px;background:#000"></div>
<div class="t" style="left:821.74px;top:408.74px;font-size:10px;color:#000;font-weight:bold;transform:scaleX(1.0500);transform-origin:0 0;">По способу оплаты</div>
<div class="t" style="left:969.98px;top:408.74px;font-size:10px;color:#000;font-weight:bold;transform:scaleX(1.0500);transform-origin:0 0;">14 750.00</div>
<div class="t" style="left:1062.18px;top:408.74px;font-size:10px;color:#000;font-weight:bold;transform:scaleX(1.0500);transform-origin:0 0;">10 000.00</div>
<div class="a" style="left:392px;top:420px;width:719px;height:1px;background:#000"></div>
<div class="a" style="left:392px;top:420px;width:1px;height:18px;background:#000"></div>
<div class="a" style="left:1110px;top:420px;width:1px;height:18px;background:#000"></div>
<div class="t" style="left:394.50px;top:424.14px;font-size:10px;color:#000;font-weight:bold;transform:scaleX(1.0500);transform-origin:0 0;">Наличные</div>
<div class="a" style="left:392px;top:437px;width:719px;height:1px;background:#000"></div>
<div class="a" style="left:392px;top:437px;width:1px;height:18px;background:#000"></div>
<div class="a" style="left:1110px;top:437px;width:1px;height:18px;background:#000"></div>
<div class="a" style="left:392px;top:454px;width:719px;height:1px;background:#000"></div>
<div class="a" style="left:392px;top:454px;width:1px;height:17px;background:#000"></div>
<div class="a" style="left:422px;top:454px;width:1px;height:17px;background:#000"></div>
<div class="a" style="left:494px;top:454px;width:1px;height:17px;background:#000"></div>
<div class="a" style="left:588px;top:454px;width:1px;height:17px;background:#000"></div>
<div class="a" style="left:637px;top:454px;width:1px;height:17px;background:#000"></div>
<div class="a" style="left:928px;top:454px;width:1px;height:17px;background:#000"></div>
<div class="a" style="left:1019px;top:454px;width:1px;height:17px;background:#000"></div>
<div class="a" style="left:1110px;top:454px;width:1px;height:17px;background:#000"></div>
<div class="t" style="left:404.11px;top:458.04px;font-size:10px;color:#000;transform:scaleX(1.0400);transform-origin:0 0;">6</div>
<div class="t" style="left:431.77px;top:458.04px;font-size:10px;color:#000;transform:scaleX(1.0720);transform-origin:0 0;">05.05.2022</div>
<div class="t" style="left:496.20px;top:458.04px;font-size:10px;color:#000;transform:scaleX(1.0700);transform-origin:0 0;">Услуга</div>
<div class="t" style="left:618.83px;top:458.04px;font-size:10px;color:#000;transform:scaleX(1.0400);transform-origin:0 0;">565</div>
<div class="t" style="left:639.70px;top:458.04px;font-size:10px;color:#000;transform:scaleX(1.0700);transform-origin:0 0;">Тетерев Дмитрий - Лечение кариеса</div>
<div class="t" style="left:976.22px;top:459.04px;font-size:10px;color:#000;transform:scaleX(1.0650);transform-origin:0 0;">1 000.00</div>
<div class="a" style="left:392px;top:470px;width:719px;height:1px;background:#000"></div>
<div class="a" style="left:392px;top:470px;width:1px;height:17px;background:#000"></div>
<div class="a" style="left:422px;top:470px;width:1px;height:17px;background:#000"></div>
<div class="a" style="left:494px;top:470px;width:1px;height:17px;background:#000"></div>
<div class="a" style="left:588px;top:470px;width:1px;height:17px;background:#000"></div>
<div class="a" style="left:637px;top:470px;width:1px;height:17px;background:#000"></div>
<div class="a" style="left:928px;top:470px;width:1px;height:17px;background:#000"></div>
<div class="a" style="left:1019px;top:470px;width:1px;height:17px;background:#000"></div>
<div class="a" style="left:1110px;top:470px;width:1px;height:17px;background:#000"></div>
<div class="t" style="left:404.11px;top:474.04px;font-size:10px;color:#000;transform:scaleX(1.0400);transform-origin:0 0;">7</div>
<div class="t" style="left:431.77px;top:474.04px;font-size:10px;color:#000;transform:scaleX(1.0720);transform-origin:0 0;">05.05.2022</div>
<div class="t" style="left:496.20px;top:474.04px;font-size:10px;color:#000;transform:scaleX(1.0700);transform-origin:0 0;">Деньги</div>
<div class="t" style="left:624.66px;top:474.04px;font-size:10px;color:#000;transform:scaleX(1.0400);transform-origin:0 0;">38</div>
<div class="t" style="left:639.70px;top:474.04px;font-size:10px;color:#000;transform:scaleX(1.0700);transform-origin:0 0;">Частный - Зарплата</div>
<div class="t" style="left:1067.42px;top:475.04px;font-size:10px;color:#000;transform:scaleX(1.0650);transform-origin:0 0;">8 000.00</div>
<div class="a" style="left:392px;top:486px;width:719px;height:1px;background:#000"></div>
<div class="a" style="left:392px;top:486px;width:1px;height:17px;background:#000"></div>
<div class="a" style="left:422px;top:486px;width:1px;height:17px;background:#000"></div>
<div class="a" style="left:494px;top:486px;width:1px;height:17px;background:#000"></div>
<div class="a" style="left:588px;top:486px;width:1px;height:17px;background:#000"></div>
<div class="a" style="left:637px;top:486px;width:1px;height:17px;background:#000"></div>
<div class="a" style="left:928px;top:486px;width:1px;height:17px;background:#000"></div>
<div class="a" style="left:1019px;top:486px;width:1px;height:17px;background:#000"></div>
<div class="a" style="left:1110px;top:486px;width:1px;height:17px;background:#000"></div>
<div class="t" style="left:404.11px;top:490.04px;font-size:10px;color:#000;transform:scaleX(1.0400);transform-origin:0 0;">8</div>
<div class="t" style="left:431.77px;top:490.04px;font-size:10px;color:#000;transform:scaleX(1.0720);transform-origin:0 0;">03.07.2022</div>
<div class="t" style="left:496.20px;top:490.04px;font-size:10px;color:#000;transform:scaleX(1.0700);transform-origin:0 0;">Услуга</div>
<div class="t" style="left:618.83px;top:490.04px;font-size:10px;color:#000;transform:scaleX(1.0400);transform-origin:0 0;">556</div>
<div class="t" style="left:639.70px;top:490.04px;font-size:10px;color:#000;transform:scaleX(1.0700);transform-origin:0 0;">Дудкина Елена - УЗИ почек</div>
<div class="t" style="left:985.11px;top:491.04px;font-size:10px;color:#000;transform:scaleX(1.0650);transform-origin:0 0;">500.00</div>
<div class="a" style="left:392px;top:502px;width:719px;height:1px;background:#000"></div>
<div class="a" style="left:392px;top:502px;width:1px;height:17px;background:#000"></div>
<div class="a" style="left:422px;top:502px;width:1px;height:17px;background:#000"></div>
<div class="a" style="left:494px;top:502px;width:1px;height:17px;background:#000"></div>
<div class="a" style="left:588px;top:502px;width:1px;height:17px;background:#000"></div>
<div class="a" style="left:637px;top:502px;width:1px;height:17px;background:#000"></div>
<div class="a" style="left:928px;top:502px;width:1px;height:17px;background:#000"></div>
<div class="a" style="left:1019px;top:502px;width:1px;height:17px;background:#000"></div>
<div class="a" style="left:1110px;top:502px;width:1px;height:17px;background:#000"></div>
<div class="t" style="left:404.11px;top:506.04px;font-size:10px;color:#000;transform:scaleX(1.0400);transform-origin:0 0;">9</div>
<div class="t" style="left:431.77px;top:506.04px;font-size:10px;color:#000;transform:scaleX(1.0720);transform-origin:0 0;">07.07.2022</div>
<div class="t" style="left:496.20px;top:506.04px;font-size:10px;color:#000;transform:scaleX(1.0700);transform-origin:0 0;">Деньги</div>
<div class="t" style="left:624.66px;top:506.04px;font-size:10px;color:#000;transform:scaleX(1.0400);transform-origin:0 0;">36</div>
<div class="t" style="left:639.70px;top:506.04px;font-size:10px;color:#000;transform:scaleX(1.0700);transform-origin:0 0;">Частный - Коммунальные услуги</div>
<div class="t" style="left:1067.42px;top:507.04px;font-size:10px;color:#000;transform:scaleX(1.0650);transform-origin:0 0;">2 000.00</div>
<div class="a" style="left:392px;top:518px;width:719px;height:1px;background:#000"></div>
<div class="a" style="left:392px;top:518px;width:1px;height:17px;background:#000"></div>
<div class="a" style="left:422px;top:518px;width:1px;height:17px;background:#000"></div>
<div class="a" style="left:494px;top:518px;width:1px;height:17px;background:#000"></div>
<div class="a" style="left:588px;top:518px;width:1px;height:17px;background:#000"></div>
<div class="a" style="left:637px;top:518px;width:1px;height:17px;background:#000"></div>
<div class="a" style="left:928px;top:518px;width:1px;height:17px;background:#000"></div>
<div class="a" style="left:1019px;top:518px;width:1px;height:17px;background:#000"></div>
<div class="a" style="left:1110px;top:518px;width:1px;height:17px;background:#000"></div>
<div class="t" style="left:401.23px;top:522.03px;font-size:10px;color:#000;transform:scaleX(1.0400);transform-origin:0 0;">10</div>
<div class="t" style="left:431.77px;top:522.03px;font-size:10px;color:#000;transform:scaleX(1.0720);transform-origin:0 0;">08.08.2022</div>
<div class="t" style="left:496.20px;top:522.03px;font-size:10px;color:#000;transform:scaleX(1.0700);transform-origin:0 0;">Услуга</div>
<div class="t" style="left:618.83px;top:522.03px;font-size:10px;color:#000;transform:scaleX(1.0400);transform-origin:0 0;">558</div>
<div class="t" style="left:639.70px;top:522.03px;font-size:10px;color:#000;transform:scaleX(1.0700);transform-origin:0 0;">Кукушкина Анна - Прием врача терапевта первичный</div>
<div class="t" style="left:985.11px;top:523.03px;font-size:10px;color:#000;transform:scaleX(1.0650);transform-origin:0 0;">800.00</div>
<div class="a" style="left:392px;top:534px;width:719px;height:1px;background:#000"></div>
<div class="a" style="left:392px;top:534px;width:1px;height:17px;background:#000"></div>
<div class="a" style="left:422px;top:534px;width:1px;height:17px;background:#000"></div>
<div class="a" style="left:494px;top:534px;width:1px;height:17px;background:#000"></div>
<div class="a" style="left:588px;top:534px;width:1px;height:17px;background:#000"></div>
<div class="a" style="left:637px;top:534px;width:1px;height:17px;background:#000"></div>
<div class="a" style="left:928px;top:534px;width:1px;height:17px;background:#000"></div>
<div class="a" style="left:1019px;top:534px;width:1px;height:17px;background:#000"></div>
<div class="a" style="left:1110px;top:534px;width:1px;height:17px;background:#000"></div>
<div class="t" style="left:401.59px;top:538.03px;font-size:10px;color:#000;transform:scaleX(1.0400);transform-origin:0 0;">11</div>
<div class="t" style="left:431.77px;top:538.03px;font-size:10px;color:#000;transform:scaleX(1.0720);transform-origin:0 0;">08.08.2022</div>
<div class="t" style="left:496.20px;top:538.03px;font-size:10px;color:#000;transform:scaleX(1.0700);transform-origin:0 0;">Услуга</div>
<div class="t" style="left:618.83px;top:538.03px;font-size:10px;color:#000;transform:scaleX(1.0400);transform-origin:0 0;">563</div>
<div class="t" style="left:639.70px;top:538.03px;font-size:10px;color:#000;transform:scaleX(1.0700);transform-origin:0 0;">Спицина Анастасия - Прием врача терапевта первичный</div>
<div class="t" style="left:976.22px;top:539.03px;font-size:10px;color:#000;transform:scaleX(1.0650);transform-origin:0 0;">6 000.00</div>
<div class="a" style="left:392px;top:550px;width:719px;height:1px;background:#000"></div>
<div class="a" style="left:392px;top:550px;width:1px;height:17px;background:#000"></div>
<div class="a" style="left:422px;top:550px;width:1px;height:17px;background:#000"></div>
<div class="a" style="left:494px;top:550px;width:1px;height:17px;background:#000"></div>
<div class="a" style="left:588px;top:550px;width:1px;height:17px;background:#000"></div>
<div class="a" style="left:637px;top:550px;width:1px;height:17px;background:#000"></div>
<div class="a" style="left:928px;top:550px;width:1px;height:17px;background:#000"></div>
<div class="a" style="left:1019px;top:550px;width:1px;height:17px;background:#000"></div>
<div class="a" style="left:1110px;top:550px;width:1px;height:17px;background:#000"></div>
<div class="t" style="left:401.23px;top:554.03px;font-size:10px;color:#000;transform:scaleX(1.0400);transform-origin:0 0;">12</div>
<div class="t" style="left:431.77px;top:554.03px;font-size:10px;color:#000;transform:scaleX(1.0720);transform-origin:0 0;">12.09.2022</div>
<div class="t" style="left:496.20px;top:554.03px;font-size:10px;color:#000;transform:scaleX(1.0700);transform-origin:0 0;">Накладная</div>
<div class="t" style="left:624.66px;top:554.03px;font-size:10px;color:#000;transform:scaleX(1.0400);transform-origin:0 0;">42</div>
<div class="t" style="left:639.70px;top:554.03px;font-size:10px;color:#000;transform:scaleX(1.0700);transform-origin:0 0;">Некая организация</div>
<div class="t" style="left:1067.42px;top:555.03px;font-size:10px;color:#000;transform:scaleX(1.0650);transform-origin:0 0;">1 000.00</div>
<div class="a" style="left:392px;top:566px;width:719px;height:1px;background:#000"></div>
<div class="a" style="left:392px;top:566px;width:1px;height:17px;background:#000"></div>
<div class="a" style="left:422px;top:566px;width:1px;height:17px;background:#000"></div>
<div class="a" style="left:494px;top:566px;width:1px;height:17px;background:#000"></div>
<div class="a" style="left:588px;top:566px;width:1px;height:17px;background:#000"></div>
<div class="a" style="left:637px;top:566px;width:1px;height:17px;background:#000"></div>
<div class="a" style="left:928px;top:566px;width:1px;height:17px;background:#000"></div>
<div class="a" style="left:1019px;top:566px;width:1px;height:17px;background:#000"></div>
<div class="a" style="left:1110px;top:566px;width:1px;height:17px;background:#000"></div>
<div class="t" style="left:401.23px;top:570.03px;font-size:10px;color:#000;transform:scaleX(1.0400);transform-origin:0 0;">13</div>
<div class="t" style="left:431.77px;top:570.03px;font-size:10px;color:#000;transform:scaleX(1.0720);transform-origin:0 0;">13.09.2022</div>
<div class="t" style="left:496.20px;top:570.03px;font-size:10px;color:#000;transform:scaleX(1.0700);transform-origin:0 0;">Деньги</div>
<div class="t" style="left:624.66px;top:570.03px;font-size:10px;color:#000;transform:scaleX(1.0400);transform-origin:0 0;">43</div>
<div class="t" style="left:639.70px;top:570.03px;font-size:10px;color:#000;transform:scaleX(1.0700);transform-origin:0 0;">Частный - Снятие</div>
<div class="t" style="left:970.31px;top:571.03px;font-size:10px;color:#000;transform:scaleX(1.0650);transform-origin:0 0;">10 000.00</div>
<div class="a" style="left:392px;top:582px;width:719px;height:1px;background:#000"></div>
<div class="a" style="left:392px;top:582px;width:1px;height:17px;background:#000"></div>
<div class="a" style="left:422px;top:582px;width:1px;height:17px;background:#000"></div>
<div class="a" style="left:494px;top:582px;width:1px;height:17px;background:#000"></div>
<div class="a" style="left:588px;top:582px;width:1px;height:17px;background:#000"></div>
<div class="a" style="left:637px;top:582px;width:1px;height:17px;background:#000"></div>
<div class="a" style="left:928px;top:582px;width:1px;height:17px;background:#000"></div>
<div class="a" style="left:1019px;top:582px;width:1px;height:17px;background:#000"></div>
<div class="a" style="left:1110px;top:582px;width:1px;height:17px;background:#000"></div>
<div class="t" style="left:401.23px;top:586.03px;font-size:10px;color:#000;transform:scaleX(1.0400);transform-origin:0 0;">14</div>
<div class="t" style="left:431.77px;top:586.03px;font-size:10px;color:#000;transform:scaleX(1.0720);transform-origin:0 0;">15.09.2022</div>
<div class="t" style="left:496.20px;top:586.03px;font-size:10px;color:#000;transform:scaleX(1.0700);transform-origin:0 0;">Деньги</div>
<div class="t" style="left:624.66px;top:586.03px;font-size:10px;color:#000;transform:scaleX(1.0400);transform-origin:0 0;">44</div>
<div class="t" style="left:639.70px;top:586.03px;font-size:10px;color:#000;transform:scaleX(1.0700);transform-origin:0 0;">Некий арендодатель - Аренда</div>
<div class="t" style="left:1067.42px;top:587.03px;font-size:10px;color:#000;transform:scaleX(1.0650);transform-origin:0 0;">7 500.00</div>
<div class="a" style="left:393px;top:598px;width:717px;height:17px;background:#dcdcdc"></div>
<div class="a" style="left:392px;top:598px;width:719px;height:1px;background:#000"></div>
<div class="a" style="left:392px;top:598px;width:1px;height:18px;background:#000"></div>
<div class="a" style="left:928px;top:598px;width:1px;height:18px;background:#000"></div>
<div class="a" style="left:1019px;top:598px;width:1px;height:18px;background:#000"></div>
<div class="a" style="left:1110px;top:598px;width:1px;height:18px;background:#000"></div>
<div class="t" style="left:847.36px;top:603.74px;font-size:10px;color:#000;font-weight:bold;transform:scaleX(1.0500);transform-origin:0 0;">По сотруднику</div>
<div class="t" style="left:969.98px;top:603.74px;font-size:10px;color:#000;font-weight:bold;transform:scaleX(1.0500);transform-origin:0 0;">18 300.00</div>
<div class="t" style="left:1062.18px;top:603.74px;font-size:10px;color:#000;font-weight:bold;transform:scaleX(1.0500);transform-origin:0 0;">18 500.00</div>
<div class="a" style="left:392px;top:615px;width:719px;height:1px;background:#000"></div>
<div class="a" style="left:392px;top:615px;width:1px;height:18px;background:#000"></div>
<div class="a" style="left:1110px;top:615px;width:1px;height:18px;background:#000"></div>
<div class="t" style="left:424.50px;top:619.13px;font-size:10px;color:#000;font-weight:bold;transform:scaleX(1.0500);transform-origin:0 0;">Акулов Николай</div>
<div class="a" style="left:392px;top:632px;width:719px;height:1px;background:#000"></div>
<div class="a" style="left:392px;top:632px;width:1px;height:17px;background:#000"></div>
<div class="a" style="left:422px;top:632px;width:1px;height:17px;background:#000"></div>
<div class="a" style="left:494px;top:632px;width:1px;height:17px;background:#000"></div>
<div class="a" style="left:588px;top:632px;width:1px;height:17px;background:#000"></div>
<div class="a" style="left:637px;top:632px;width:1px;height:17px;background:#000"></div>
<div class="a" style="left:928px;top:632px;width:1px;height:17px;background:#000"></div>
<div class="a" style="left:1019px;top:632px;width:1px;height:17px;background:#000"></div>
<div class="a" style="left:1110px;top:632px;width:1px;height:17px;background:#000"></div>
<div class="t" style="left:401.23px;top:636.03px;font-size:10px;color:#000;transform:scaleX(1.0400);transform-origin:0 0;">15</div>
<div class="t" style="left:431.77px;top:636.03px;font-size:10px;color:#000;transform:scaleX(1.0720);transform-origin:0 0;">08.08.2022</div>
<div class="t" style="left:496.20px;top:636.03px;font-size:10px;color:#000;transform:scaleX(1.0700);transform-origin:0 0;">Услуга</div>
<div class="t" style="left:618.83px;top:636.03px;font-size:10px;color:#000;transform:scaleX(1.0400);transform-origin:0 0;">620</div>
<div class="t" style="left:639.70px;top:636.03px;font-size:10px;color:#000;transform:scaleX(1.0700);transform-origin:0 0;">Кукушкина Анна - Прием врача терапевта первичный</div>
<div class="t" style="left:976.22px;top:637.03px;font-size:10px;color:#000;transform:scaleX(1.0650);transform-origin:0 0;">5 000.00</div>
<div class="a" style="left:392px;top:648px;width:719px;height:1px;background:#000"></div>
<div class="a" style="left:392px;top:648px;width:1px;height:17px;background:#000"></div>
<div class="a" style="left:422px;top:648px;width:1px;height:17px;background:#000"></div>
<div class="a" style="left:494px;top:648px;width:1px;height:17px;background:#000"></div>
<div class="a" style="left:588px;top:648px;width:1px;height:17px;background:#000"></div>
<div class="a" style="left:637px;top:648px;width:1px;height:17px;background:#000"></div>
<div class="a" style="left:928px;top:648px;width:1px;height:17px;background:#000"></div>
<div class="a" style="left:1019px;top:648px;width:1px;height:17px;background:#000"></div>
<div class="a" style="left:1110px;top:648px;width:1px;height:17px;background:#000"></div>
<div class="t" style="left:401.23px;top:652.03px;font-size:10px;color:#000;transform:scaleX(1.0400);transform-origin:0 0;">16</div>
<div class="t" style="left:431.77px;top:652.03px;font-size:10px;color:#000;transform:scaleX(1.0720);transform-origin:0 0;">09.09.2022</div>
<div class="t" style="left:496.20px;top:652.03px;font-size:10px;color:#000;transform:scaleX(1.0700);transform-origin:0 0;">Услуга</div>
<div class="t" style="left:618.83px;top:652.03px;font-size:10px;color:#000;transform:scaleX(1.0400);transform-origin:0 0;">616</div>
<div class="t" style="left:639.70px;top:652.03px;font-size:10px;color:#000;transform:scaleX(1.0700);transform-origin:0 0;">Голубева Евгения - Биохимический анализ крови</div>
<div class="t" style="left:976.22px;top:653.03px;font-size:10px;color:#000;transform:scaleX(1.0650);transform-origin:0 0;">1 500.00</div>
<div class="a" style="left:393px;top:664px;width:717px;height:17px;background:#dcdcdc"></div>
<div class="a" style="left:392px;top:664px;width:719px;height:1px;background:#000"></div>
<div class="a" style="left:392px;top:664px;width:1px;height:18px;background:#000"></div>
<div class="a" style="left:928px;top:664px;width:1px;height:18px;background:#000"></div>
<div class="a" style="left:1019px;top:664px;width:1px;height:18px;background:#000"></div>
<div class="a" style="left:1110px;top:664px;width:1px;height:18px;background:#000"></div>
<div class="t" style="left:847.36px;top:669.74px;font-size:10px;color:#000;font-weight:bold;transform:scaleX(1.0500);transform-origin:0 0;">По сотруднику</div>
<div class="t" style="left:975.80px;top:669.74px;font-size:10px;color:#000;font-weight:bold;transform:scaleX(1.0500);transform-origin:0 0;">6 500.00</div>
<div class="t" style="left:1088.48px;top:669.74px;font-size:10px;color:#000;font-weight:bold;transform:scaleX(1.0500);transform-origin:0 0;">0.00</div>
<div class="a" style="left:392px;top:681px;width:719px;height:1px;background:#000"></div>
<div class="a" style="left:392px;top:681px;width:1px;height:11px;background:#000"></div>
<div class="a" style="left:1110px;top:681px;width:1px;height:11px;background:#000"></div>
</div></div>
<div class="t" style="left:337.70px;top:691.69px;font-size:11px;color:#222;transform:scaleX(0.9962);transform-origin:0 0;">Страница: 1 из 2</div>
<div class="a" style="left:470px;top:689px;width:1px;height:15px;background:#b4b4b4"></div>
<div class="a" style="left:1231px;top:689px;width:1px;height:15px;background:#b4b4b4"></div>
<div class="a" style="left:17px;top:706px;width:1246px;height:4px;border:1px solid #b4b4b4;background:#fff"></div>
<div class="a" style="left:19px;top:709px;width:313px;height:40px;background:#f0f0f0;border-left:1px solid #b4b4b4;border-bottom:1px solid #b4b4b4"></div>
<div class="a" style="left:187px;top:709px;width:1px;height:40px;background:#b4b4b4"></div>
<div class="a" style="left:331px;top:706px;width:176px;height:43px;background:#fff;border-left:1px solid #b4b4b4;border-right:1px solid #b4b4b4;border-top:1px solid #b4b4b4"></div>
<div class="a" style="left:332px;top:749px;width:175px;height:2px;background:#1a96e6"></div>
<svg class="a" style="left:32px;top:718px" width="24" height="21" viewBox="0 0 24 21"><rect x="0.5" y="0.5" width="23" height="20" rx="2" fill="#e8eef8" stroke="#4a6cb4"/><rect x="1" y="1" width="22" height="4.5" fill="#8ab8e8"/><rect x="19" y="2" width="3" height="2.5" fill="#e84030"/></svg>
<div class="t" style="left:65.70px;top:722.81px;font-size:11.8px;color:#505050;transform:scaleX(0.9290);transform-origin:0 0;">Быстрый запуск</div>
<div class="a" style="left:159px;top:720px;width:15px;height:15px;background:#fff"></div>
<svg class="a" style="left:162px;top:723.5px" width="9" height="8" viewBox="0 0 9 8"><path d="M0.8 0.8L8.2 7.5M8.2 0.8L0.8 7.5" stroke="#1a8ae0" stroke-width="1.7"/></svg>
<svg class="a" style="left:200px;top:713px" width="26" height="28" viewBox="0 0 26 28"><defs><linearGradient id="bk" x1="0" x2="1"><stop offset="0" stop-color="#2a4a8a"/><stop offset="0.25" stop-color="#5a8ad0"/><stop offset="1" stop-color="#a8ccf0"/></linearGradient></defs><rect x="0.5" y="0.5" width="24" height="27" rx="2" fill="url(#bk)" stroke="#3a5a9a"/><rect x="2" y="1" width="3" height="26" fill="#24407a"/></svg>
<div class="t" style="left:234.50px;top:722.81px;font-size:11.8px;color:#505050;transform:scaleX(0.9029);transform-origin:0 0;">Посещения</div>
<div class="a" style="left:303px;top:720px;width:15px;height:15px;background:#fff"></div>
<svg class="a" style="left:306px;top:723.5px" width="9" height="8" viewBox="0 0 9 8"><path d="M0.8 0.8L8.2 7.5M8.2 0.8L0.8 7.5" stroke="#1a8ae0" stroke-width="1.7"/></svg>
<svg class="a" style="left:344.5px;top:713px" width="24" height="30" viewBox="0 0 24 30"><rect x="0.5" y="0.5" width="23" height="29" fill="#f4f6fb" stroke="#7b8cc4"/><rect x="3.5" y="3" width="16" height="5" fill="#9cc6ee" stroke="#5a8ccc" stroke-width="0.8"/><path d="M3.5 10.5H19.5" stroke="#6a7ab0" stroke-width="0.8"/><path d="M3.5 12.7H12.5" stroke="#6a7ab0" stroke-width="0.8"/><path d="M3.5 14.9H12.5" stroke="#6a7ab0" stroke-width="0.8"/><path d="M3.5 17.1H12.5" stroke="#6a7ab0" stroke-width="0.8"/><path d="M3.5 19.3H12.5" stroke="#6a7ab0" stroke-width="0.8"/><path d="M3.5 21.5H12.5" stroke="#6a7ab0" stroke-width="0.8"/><path d="M3.5 23.7H12.5" stroke="#6a7ab0" stroke-width="0.8"/><rect x="11" y="16.5" width="3.6" height="10" fill="#3c8ad8" stroke="#2a62a8" stroke-width="0.6"/><rect x="15.5" y="12.5" width="4" height="14" fill="#f5a040" stroke="#c87020" stroke-width="0.6"/></svg>
<div class="t" style="left:378.50px;top:723.21px;font-size:11.8px;color:#1a8ae0;transform:scaleX(0.9600);transform-origin:0 0;">Отчет - Платежи</div>
<svg class="a" style="left:481px;top:724px" width="9" height="8" viewBox="0 0 9 8"><path d="M0.8 0.8L8.2 7.5M8.2 0.8L0.8 7.5" stroke="#1a8ae0" stroke-width="1.7"/></svg>
<svg class="a" style="left:23px;top:753px" width="16" height="16" viewBox="0 0 16 16"><circle cx="8" cy="8" r="7.8" fill="#4a7ec0"/><rect x="6.8" y="3" width="2.6" height="2.4" fill="#fff"/><rect x="6.8" y="6.5" width="2.6" height="6.5" fill="#fff"/></svg>
<div class="t" style="left:56.20px;top:756.10px;font-size:12.4px;color:#222;transform:scaleX(0.8740);transform-origin:0 0;">7.3.910.10 Professional</div>
<div class="a" style="left:192px;top:754px;width:1px;height:15px;background:#a8a8a8"></div>
<svg class="a" style="left:203px;top:754px" width="13" height="15" viewBox="0 0 13 15"><defs><linearGradient id="db" x1="0" x2="1"><stop offset="0" stop-color="#e08020"/><stop offset="0.5" stop-color="#fcd088"/><stop offset="1" stop-color="#e08020"/></linearGradient></defs><rect x="0.5" y="1.5" width="12" height="12.5" rx="2" fill="url(#db)" stroke="#c06a18" stroke-width="0.8"/><path d="M0.5 5.5Q6.5 7.5 12.5 5.5M0.5 9.5Q6.5 11.5 12.5 9.5" fill="none" stroke="#c06a18" stroke-width="0.8"/><ellipse cx="6.5" cy="2" rx="6" ry="1.6" fill="#fcd088" stroke="#c06a18" stroke-width="0.8"/></svg>
<div class="t" style="left:233.30px;top:756.10px;font-size:12.4px;color:#222;transform:scaleX(0.9097);transform-origin:0 0;">localhost (utf8)</div>
<div class="a" style="left:327px;top:754px;width:1px;height:15px;background:#a8a8a8"></div>
<svg class="a" style="left:337.5px;top:754px" width="15" height="15" viewBox="0 0 15 15"><circle cx="7.5" cy="5" r="3.6" fill="#e8b27a" stroke="#b0723a" stroke-width="0.8"/><path d="M3.8 4.5Q4 1 7.5 1Q11 1 11.2 4.5Q10 2.6 7.5 3Q5 2.6 3.8 4.5Z" fill="#c0702a"/><path d="M0.8 14.5C0.8 10.5 3.5 9 7.5 9C11.5 9 14.2 10.5 14.2 14.5Z" fill="#72b444" stroke="#4e8a2a" stroke-width="0.8"/></svg>
<div class="t" style="left:369.30px;top:756.10px;font-size:12.4px;color:#222;transform:scaleX(0.8290);transform-origin:0 0;">SYSDBA (MAIN) - A</div>
<div class="a" style="left:483px;top:754px;width:1px;height:15px;background:#a8a8a8"></div>
<svg class="a" style="left:492.5px;top:754px" width="15" height="15" viewBox="0 0 15 15"><rect x="0.5" y="0.5" width="14" height="14" fill="#fff" stroke="#6a7aa8"/><rect x="1" y="1" width="13" height="3.5" fill="#e05a4a"/><text x="7.5" y="13" font-size="9" font-weight="bold" fill="#3a4a78" text-anchor="middle" font-family="Liberation Sans">31</text></svg>
<div class="t" style="left:524.40px;top:756.10px;font-size:12.4px;color:#222;transform:scaleX(0.9023);transform-origin:0 0;">08.02.2023</div>
<div class="a" style="left:601px;top:754px;width:1px;height:15px;background:#a8a8a8"></div>
<div class="t" style="left:629.30px;top:756.10px;font-size:12.4px;color:#222;transform:scaleX(0.9186);transform-origin:0 0;">0:00:00:295</div>
<div class="a" style="left:714px;top:754px;width:1px;height:15px;background:#a8a8a8"></div>
<div class="a" style="left:1237px;top:754px;width:1px;height:15px;background:#a8a8a8"></div>
<svg class="a" style="left:1249px;top:758px" width="12" height="11" viewBox="0 0 12 11"><path d="M9.5 0V3M8 1.5H11" stroke="#666" stroke-width="1"/><path d="M5.5 4V7M4 5.5H7" stroke="#666" stroke-width="1"/><path d="M9.5 4V7M8 5.5H11" stroke="#666" stroke-width="1"/><path d="M1.5 8V11M0 9.5H3" stroke="#666" stroke-width="1"/><path d="M5.5 8V11M4 9.5H7" stroke="#666" stroke-width="1"/><path d="M9.5 8V11M8 9.5H11" stroke="#666" stroke-width="1"/></svg>
</body></html>
